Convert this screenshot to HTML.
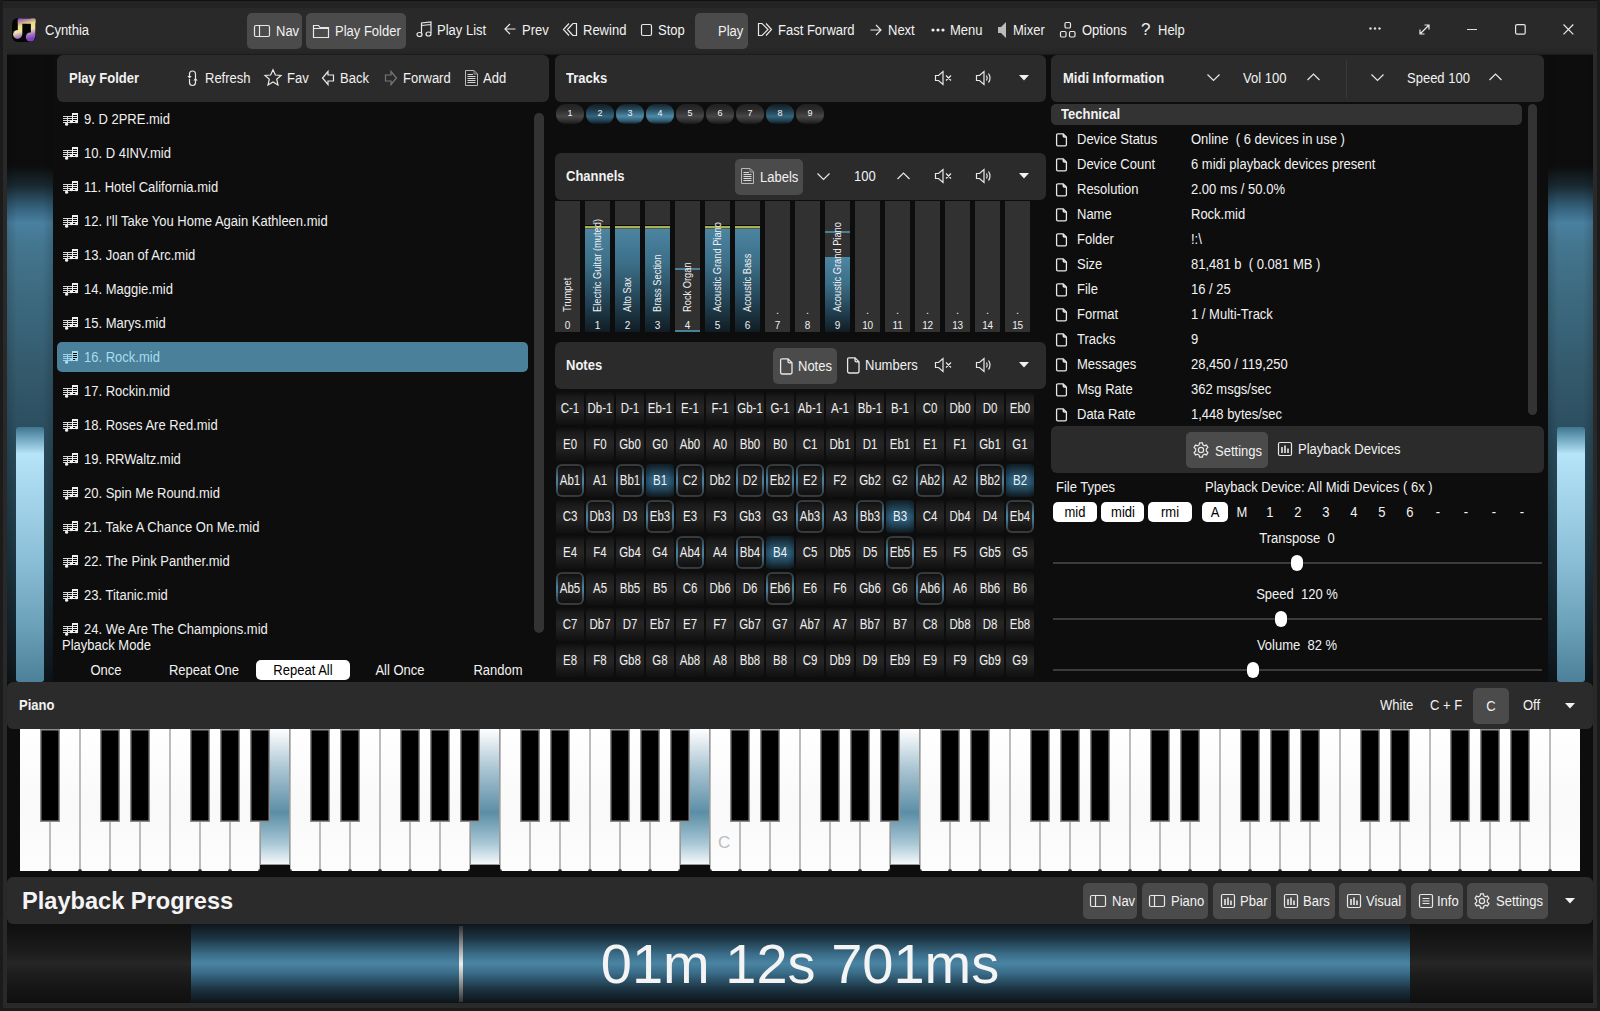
<!DOCTYPE html><html><head><meta charset="utf-8"><style>
*{margin:0;padding:0;box-sizing:border-box}
html,body{width:1600px;height:1011px;overflow:hidden;background:#222;font-family:"Liberation Sans",sans-serif;font-size:13px;color:#f2f2f2}
.ab{position:absolute}
.t{position:absolute;white-space:nowrap;line-height:16px}
.b{font-weight:bold}
.pnl{position:absolute;background:#2b2b2b;border-radius:6px}
.btn{position:absolute;background:#4b4b4b;border-radius:5px}
svg{position:absolute;overflow:visible}
</style></head><body>

<div class="ab" style="left:0;top:0;width:1600px;height:1011px;background:#292929"></div>
<div class="ab" style="left:0;top:0;width:1600px;height:8px;background:#232323"></div><div class="ab" style="left:0;top:0;width:1600px;height:1px;background:#111"></div>
<div class="ab" style="left:0;top:0;width:3px;height:1011px;background:#1b1b1b"></div>
<div class="ab" style="left:1597px;top:0;width:3px;height:1011px;background:#1b1b1b"></div>
<div class="ab" style="left:0;top:1008px;width:1600px;height:3px;background:#1b1b1b"></div>
<div class="ab" style="left:7px;top:47px;width:1586px;height:7px;background:linear-gradient(to bottom,rgba(0,0,0,0),rgba(0,0,0,.12))"></div>
<div class="ab" style="left:7px;top:54px;width:1586px;height:1px;background:#1c1c1c"></div>
<div class="ab" style="left:7px;top:55px;width:1586px;height:948px;background:#0d0d0d"></div>
<svg style="left:12px;top:18px" width="24" height="24" viewBox="0 0 24 24">
<defs><linearGradient id="ig" gradientUnits="userSpaceOnUse" x1="0" y1="0" x2="6" y2="24"><stop offset="0" stop-color="#7b36c4"/><stop offset=".12" stop-color="#8e56b8"/><stop offset=".4" stop-color="#ece27a"/><stop offset=".62" stop-color="#efe0b0"/><stop offset=".85" stop-color="#a070c0"/><stop offset="1" stop-color="#8040c0"/></linearGradient></defs>
<rect x="0" y="0" width="24" height="24" rx="6" fill="#050505"/>
<g fill="url(#ig)"><rect x="5.8" y="0.6" width="17.6" height="5.2" rx="1.5"/><rect x="5.8" y="0.6" width="4.5" height="16"/><rect x="18.9" y="0.6" width="4.5" height="18.5"/><circle cx="5.6" cy="16.4" r="4.5"/><circle cx="18.4" cy="19" r="4.6"/></g>
</svg>
<div class="t" style="left:45px;top:22px;font-size:14px;color:#f2f2f2;transform-origin:0 0;transform:scaleX(0.9286);">Cynthia</div>
<div class="btn" style="left:247px;top:13px;width:55px;height:36px"></div>
<div class="btn" style="left:306px;top:13px;width:100px;height:36px"></div>
<div class="btn" style="left:695px;top:13px;width:53px;height:36px"></div>
<svg style="left:254px;top:25px" width="16" height="12"><rect x=".5" y=".5" width="15" height="11" rx="1.5" fill="none" stroke="#e8e8e8" stroke-width="1.2"/><line x1="5.5" y1=".5" x2="5.5" y2="11.5" fill="none" stroke="#e8e8e8" stroke-width="1.2"/></svg>
<div class="t" style="left:276px;top:23px;font-size:14px;color:#f2f2f2;transform-origin:0 0;transform:scaleX(0.9286);">Nav</div>
<svg style="left:313px;top:24px" width="16" height="14"><path d="M.5 1.5 h5 l1.5 2 h8.5 v10 h-15 z M.5 4.5 h15" fill="none" stroke="#e8e8e8" stroke-width="1.2"/></svg>
<div class="t" style="left:335px;top:23px;font-size:14px;color:#f2f2f2;transform-origin:0 0;transform:scaleX(0.9286);">Play Folder</div>
<svg style="left:416px;top:21px" width="16" height="17"><path d="M5.5 13 V2 L15 1 V12 M5.5 4.5 L15 3.5" fill="none" stroke="#e8e8e8" stroke-width="1.2"/><ellipse cx="3.5" cy="13.5" rx="2.5" ry="2" fill="none" stroke="#e8e8e8" stroke-width="1.2"/><ellipse cx="12.5" cy="13" rx="2.5" ry="2" fill="none" stroke="#e8e8e8" stroke-width="1.2"/></svg>
<div class="t" style="left:437px;top:22px;font-size:14px;color:#f2f2f2;transform-origin:0 0;transform:scaleX(0.9286);">Play List</div>
<svg style="left:504px;top:23px" width="12" height="12"><path d="M11.5 6 H1 M6 1 L1 6 L6 11" fill="none" stroke="#e8e8e8" stroke-width="1.2"/></svg>
<div class="t" style="left:522px;top:22px;font-size:14px;color:#f2f2f2;transform-origin:0 0;transform:scaleX(0.9286);">Prev</div>
<svg style="left:563px;top:23px" width="14" height="13"><path d="M6 .5 L.5 6.5 L6 12.5 M10 .5 L4.5 6.5 L10 12.5 M10 .5 H13.5 V12.5 H10" fill="none" stroke="#e8e8e8" stroke-width="1.2"/></svg>
<div class="t" style="left:583px;top:22px;font-size:14px;color:#f2f2f2;transform-origin:0 0;transform:scaleX(0.9286);">Rewind</div>
<svg style="left:641px;top:24px" width="11" height="12"><rect x=".5" y=".5" width="10" height="11" rx="1.5" fill="none" stroke="#e8e8e8" stroke-width="1.2"/></svg>
<div class="t" style="left:658px;top:22px;font-size:14px;color:#f2f2f2;transform-origin:0 0;transform:scaleX(0.9286);">Stop</div>
<div class="t" style="left:718px;top:23px;font-size:14px;color:#f2f2f2;transform-origin:0 0;transform:scaleX(0.9286);">Play</div>
<svg style="left:758px;top:23px" width="14" height="13"><path d="M.5 .5 H4 L10 6.5 L4 12.5 H.5 Z M8 .5 L13.5 6.5 L8 12.5" fill="none" stroke="#e8e8e8" stroke-width="1.2"/></svg>
<div class="t" style="left:778px;top:22px;font-size:14px;color:#f2f2f2;transform-origin:0 0;transform:scaleX(0.9286);">Fast Forward</div>
<svg style="left:870px;top:24px" width="12" height="12"><path d="M.5 6 H11 M6 1 L11 6 L6 11" fill="none" stroke="#e8e8e8" stroke-width="1.2"/></svg>
<div class="t" style="left:888px;top:22px;font-size:14px;color:#f2f2f2;transform-origin:0 0;transform:scaleX(0.9286);">Next</div>
<svg style="left:931px;top:28px" width="14" height="4"><circle cx="2" cy="2" r="1.6" fill="#eee"/><circle cx="7" cy="2" r="1.6" fill="#eee"/><circle cx="12" cy="2" r="1.6" fill="#eee"/></svg>
<div class="t" style="left:950px;top:22px;font-size:14px;color:#f2f2f2;transform-origin:0 0;transform:scaleX(0.9286);">Menu</div>
<svg style="left:998px;top:22px" width="9" height="16"><path d="M0 5 H3 L8 0 V16 L3 11 H0 Z" fill="#bbb"/></svg>
<div class="t" style="left:1013px;top:22px;font-size:14px;color:#f2f2f2;transform-origin:0 0;transform:scaleX(0.9286);">Mixer</div>
<svg style="left:1060px;top:22px" width="16" height="16"><rect x="5" y=".5" width="5.5" height="5.5" rx="1.2" fill="none" stroke="#e8e8e8" stroke-width="1.2"/><rect x=".5" y="9.5" width="5.5" height="5.5" rx="1.2" fill="none" stroke="#e8e8e8" stroke-width="1.2"/><rect x="9.5" y="9.5" width="5.5" height="5.5" rx="1.2" fill="none" stroke="#e8e8e8" stroke-width="1.2"/></svg>
<div class="t" style="left:1082px;top:22px;font-size:14px;color:#f2f2f2;transform-origin:0 0;transform:scaleX(0.9286);">Options</div>
<div class="t" style="left:1141px;top:20px;font-size:17px;line-height:20px;color:#eee">?</div>
<div class="t" style="left:1158px;top:22px;font-size:14px;color:#f2f2f2;transform-origin:0 0;transform:scaleX(0.9286);">Help</div>
<svg style="left:1369px;top:27px" width="12" height="3"><circle cx="1.5" cy="1.5" r="1.2" fill="#ddd"/><circle cx="6" cy="1.5" r="1.2" fill="#ddd"/><circle cx="10.5" cy="1.5" r="1.2" fill="#ddd"/></svg>
<svg style="left:1419px;top:24px" width="11" height="11"><path d="M1 10 L10 1 M5.5 1 H10 V5.5 M1 5.5 V10 H5.5" fill="none" stroke="#e8e8e8" stroke-width="1.2"/></svg>
<div class="ab" style="left:1467px;top:29px;width:10px;height:1.4px;background:#e0e0e0"></div>
<svg style="left:1515px;top:24px" width="11" height="11"><rect x=".6" y=".6" width="9.6" height="9.6" rx="1.5" fill="none" stroke="#e8e8e8" stroke-width="1.2"/></svg>
<svg style="left:1563px;top:24px" width="11" height="11"><path d="M.5 .5 L10.3 10.3 M10.3 .5 L.5 10.3" fill="none" stroke="#e8e8e8" stroke-width="1.2"/></svg>
<div class="ab" style="left:7px;top:55px;width:46px;height:627px;background:linear-gradient(to bottom,#0d0d0d 0px,#0d0d0d 111px,#1a2a32 131px,#33607a 152px,#4a80a0 168px,#43768f 190px,#3d6a80 240px,#33596b 320px,#2c4f60 372px,#1d3743 500px,#122029 590px,#0e1519 628px)"></div>
<div class="ab" style="left:7px;top:55px;width:46px;height:627px;background:linear-gradient(to right,rgba(0,0,0,.15),rgba(0,0,0,0) 22%,rgba(0,0,0,0) 78%,rgba(0,0,0,.15))"></div>
<div class="ab" style="left:16px;top:427px;width:28px;height:255px;border-radius:3px;background:linear-gradient(to bottom,#3f7590 0px,#7ab0c8 14px,#b6e4f8 27px,#a8d8ee 60px,#8cc0d8 130px,#6aa0b8 200px,#4d8099 255px)"></div>
<div class="ab" style="left:1548px;top:55px;width:45px;height:627px;background:linear-gradient(to bottom,#0d0d0d 0px,#0d0d0d 111px,#1a2a32 131px,#33607a 152px,#4a80a0 168px,#43768f 190px,#3d6a80 240px,#33596b 320px,#2c4f60 372px,#1d3743 500px,#122029 590px,#0e1519 628px)"></div>
<div class="ab" style="left:1548px;top:55px;width:45px;height:627px;background:linear-gradient(to right,rgba(0,0,0,.15),rgba(0,0,0,0) 22%,rgba(0,0,0,0) 78%,rgba(0,0,0,.15))"></div>
<div class="ab" style="left:1557px;top:427px;width:28px;height:255px;border-radius:3px;background:linear-gradient(to bottom,#3f7590 0px,#7ab0c8 14px,#b6e4f8 27px,#a8d8ee 60px,#8cc0d8 130px,#6aa0b8 200px,#4d8099 255px)"></div>
<div class="pnl" style="left:57px;top:55px;width:492px;height:47px"></div>
<div class="pnl" style="left:555px;top:55px;width:491px;height:47px"></div>
<div class="pnl" style="left:1051px;top:55px;width:493px;height:47px"></div>
<div class="pnl" style="left:555px;top:153px;width:491px;height:47px"></div>
<div class="pnl" style="left:555px;top:342px;width:491px;height:47px"></div>
<div class="pnl" style="left:7px;top:682px;width:1586px;height:47px"></div>
<div class="pnl" style="left:7px;top:877px;width:1586px;height:47px"></div>
<div class="t b" style="left:69px;top:70px;font-size:14px;color:#f2f2f2;transform-origin:0 0;transform:scaleX(0.9286);">Play Folder</div>
<svg style="left:187px;top:70px" width="12" height="17"><path d="M2.5 6 V4 A3 3 0 0 1 8.5 4 V12.5 M2.5 9 V12.5 A3 3 0 0 0 8.5 12.5" fill="none" stroke="#e8e8e8" stroke-width="1.2"/><path d="M.3 6 H4.7 L2.5 8.6 Z M6.3 10.6 H10.7 L8.5 8 Z" fill="#e8e8e8"/></svg>
<div class="t" style="left:205px;top:70px;font-size:14px;color:#f2f2f2;transform-origin:0 0;transform:scaleX(0.9286);">Refresh</div>
<svg style="left:264px;top:69px" width="18" height="17"><path d="M9 .8 L11.4 6 L17 6.5 L12.7 10.2 L14 16 L9 13 L4 16 L5.3 10.2 L1 6.5 L6.6 6 Z" fill="none" stroke="#e8e8e8" stroke-width="1.2"/></svg>
<div class="t" style="left:287px;top:70px;font-size:14px;color:#f2f2f2;transform-origin:0 0;transform:scaleX(0.9286);">Fav</div>
<svg style="left:322px;top:71px" width="12" height="14"><path d="M6 .5 L.5 7 L6 13.5 V10 H11.5 V4 H6 Z" fill="none" stroke="#e8e8e8" stroke-width="1.2"/></svg>
<div class="t" style="left:340px;top:70px;font-size:14px;color:#f2f2f2;transform-origin:0 0;transform:scaleX(0.9286);">Back</div>
<svg style="left:385px;top:71px" width="12" height="14"><path d="M6 .5 L11.5 7 L6 13.5 V10 H.5 V4 H6 Z" fill="none" stroke="#777" stroke-width="1.2"/></svg>
<div class="t" style="left:403px;top:70px;font-size:14px;color:#f2f2f2;transform-origin:0 0;transform:scaleX(0.9286);">Forward</div>
<svg style="left:465px;top:70px" width="13" height="17"><path d="M.5 .5 H9 L12.5 4 V15.5 H.5 Z" fill="none" stroke="#b8b8b8" stroke-width="1"/><path d="M9 .5 V4 H12.5" fill="none" stroke="#999" stroke-width="1"/><path d="M2.5 4.5 H8 M2.5 6.5 H10.5 M2.5 8.5 H10.5 M2.5 10.5 H10.5 M2.5 12.5 H10.5" fill="none" stroke="#d8d8d8" stroke-width="1"/></svg>
<div class="t" style="left:483px;top:70px;font-size:14px;color:#f2f2f2;transform-origin:0 0;transform:scaleX(0.9286);">Add</div>
<div class="t b" style="left:566px;top:70px;font-size:14px;color:#f2f2f2;transform-origin:0 0;transform:scaleX(0.9286);">Tracks</div>
<svg style="left:935px;top:71px" width="18" height="15"><path d="M.5 4.5 H3.5 L8 .5 V13.5 L3.5 9.5 H.5 Z M11 4.5 L16 9.5 M16 4.5 L11 9.5" fill="none" stroke="#e8e8e8" stroke-width="1.2"/></svg>
<svg style="left:976px;top:71px" width="17" height="15"><path d="M.5 4.5 H3.5 L8 .5 V13.5 L3.5 9.5 H.5 Z M10.5 4.5 Q12 7 10.5 9.5 M12.5 2.5 Q15.5 7 12.5 11.5" fill="none" stroke="#e8e8e8" stroke-width="1.2"/></svg>
<svg style="left:1019px;top:75px" width="10" height="6"><path d="M0 0 H10 L5 5.5 Z" fill="#f2f2f2"/></svg>
<div class="ab" style="left:556px;top:104px;width:28px;height:20px;border-radius:9px;background:linear-gradient(to bottom,#202020 0%,#2c2c2c 30%,#474747 62%,#2e2e2e 85%,#181818 100%)"></div>
<div class="t" style="left:470px;width:200px;text-align:center;top:105px;font-size:9px;color:#f4f4f4;">1</div>
<div class="ab" style="left:586px;top:104px;width:28px;height:20px;border-radius:9px;background:linear-gradient(to bottom,#111b22 0%,#1f3a4a 30%,#34647e 62%,#203e4e 85%,#0e171d 100%)"></div>
<div class="t" style="left:500px;width:200px;text-align:center;top:105px;font-size:9px;color:#f4f4f4;">2</div>
<div class="ab" style="left:616px;top:104px;width:28px;height:20px;border-radius:9px;background:linear-gradient(to bottom,#14222b 0%,#2a4f62 30%,#4d8aa8 62%,#2f5a70 85%,#111c23 100%)"></div>
<div class="t" style="left:530px;width:200px;text-align:center;top:105px;font-size:9px;color:#f4f4f4;">3</div>
<div class="ab" style="left:646px;top:104px;width:28px;height:20px;border-radius:9px;background:linear-gradient(to bottom,#14222b 0%,#2a4f62 30%,#4d8aa8 62%,#2f5a70 85%,#111c23 100%)"></div>
<div class="t" style="left:560px;width:200px;text-align:center;top:105px;font-size:9px;color:#f4f4f4;">4</div>
<div class="ab" style="left:676px;top:104px;width:28px;height:20px;border-radius:9px;background:linear-gradient(to bottom,#202020 0%,#2c2c2c 30%,#474747 62%,#2e2e2e 85%,#181818 100%)"></div>
<div class="t" style="left:590px;width:200px;text-align:center;top:105px;font-size:9px;color:#f4f4f4;">5</div>
<div class="ab" style="left:706px;top:104px;width:28px;height:20px;border-radius:9px;background:linear-gradient(to bottom,#202020 0%,#2c2c2c 30%,#474747 62%,#2e2e2e 85%,#181818 100%)"></div>
<div class="t" style="left:620px;width:200px;text-align:center;top:105px;font-size:9px;color:#f4f4f4;">6</div>
<div class="ab" style="left:736px;top:104px;width:28px;height:20px;border-radius:9px;background:linear-gradient(to bottom,#202020 0%,#2c2c2c 30%,#474747 62%,#2e2e2e 85%,#181818 100%)"></div>
<div class="t" style="left:650px;width:200px;text-align:center;top:105px;font-size:9px;color:#f4f4f4;">7</div>
<div class="ab" style="left:766px;top:104px;width:28px;height:20px;border-radius:9px;background:linear-gradient(to bottom,#111b22 0%,#1f3a4a 30%,#34647e 62%,#203e4e 85%,#0e171d 100%)"></div>
<div class="t" style="left:680px;width:200px;text-align:center;top:105px;font-size:9px;color:#f4f4f4;">8</div>
<div class="ab" style="left:796px;top:104px;width:28px;height:20px;border-radius:9px;background:linear-gradient(to bottom,#202020 0%,#2c2c2c 30%,#474747 62%,#2e2e2e 85%,#181818 100%)"></div>
<div class="t" style="left:710px;width:200px;text-align:center;top:105px;font-size:9px;color:#f4f4f4;">9</div>
<div class="t b" style="left:566px;top:168px;font-size:14px;color:#f2f2f2;transform-origin:0 0;transform:scaleX(0.9286);">Channels</div>
<div class="btn" style="left:735px;top:159px;width:68px;height:36px"></div>
<svg style="left:741px;top:168px" width="13" height="17"><path d="M.5 .5 H9 L12.5 4 V15.5 H.5 Z" fill="none" stroke="#b8b8b8" stroke-width="1"/><path d="M9 .5 V4 H12.5" fill="none" stroke="#999" stroke-width="1"/><path d="M2.5 4.5 H8 M2.5 6.5 H10.5 M2.5 8.5 H10.5 M2.5 10.5 H10.5 M2.5 12.5 H10.5" fill="none" stroke="#d8d8d8" stroke-width="1"/></svg>
<div class="t" style="left:760px;top:169px;font-size:14px;color:#f2f2f2;transform-origin:0 0;transform:scaleX(0.9286);">Labels</div>
<svg style="left:817px;top:173px" width="13" height="8"><path d="M.5 .5 L6.5 6.5 L12.5 .5" fill="none" stroke="#e8e8e8" stroke-width="1.2"/></svg>
<div class="t" style="left:854px;top:168px;font-size:14px;color:#f2f2f2;transform-origin:0 0;transform:scaleX(0.9286);">100</div>
<svg style="left:897px;top:172px" width="13" height="8"><path d="M.5 7 L6.5 1 L12.5 7" fill="none" stroke="#e8e8e8" stroke-width="1.2"/></svg>
<svg style="left:935px;top:169px" width="18" height="15"><path d="M.5 4.5 H3.5 L8 .5 V13.5 L3.5 9.5 H.5 Z M11 4.5 L16 9.5 M16 4.5 L11 9.5" fill="none" stroke="#e8e8e8" stroke-width="1.2"/></svg>
<svg style="left:976px;top:169px" width="17" height="15"><path d="M.5 4.5 H3.5 L8 .5 V13.5 L3.5 9.5 H.5 Z M10.5 4.5 Q12 7 10.5 9.5 M12.5 2.5 Q15.5 7 12.5 11.5" fill="none" stroke="#e8e8e8" stroke-width="1.2"/></svg>
<svg style="left:1019px;top:173px" width="10" height="6"><path d="M0 0 H10 L5 5.5 Z" fill="#f2f2f2"/></svg>
<div class="ab" style="left:555px;top:201px;width:25px;height:131px;background:#313131"></div>
<div class="t" style="left:567.5px;top:312px;font-size:10px;line-height:12px;color:#f0f0f0;transform-origin:0 0;transform:rotate(-90deg) translate(0,-6.5px) scaleX(0.93)">Trumpet</div>
<div class="t" style="left:467.5px;width:200px;text-align:center;top:318px;font-size:10px;color:#f0f0f0;letter-spacing:-0.3px">0</div>
<div class="ab" style="left:585px;top:201px;width:25px;height:131px;background:#313131"></div>
<div class="ab" style="left:585px;top:226px;width:25px;height:106px;background:linear-gradient(to bottom,#4d86a3 0%,#3c6f88 35%,#244456 70%,#101c24 100%)"></div>
<div class="ab" style="left:585px;top:225px;width:25px;height:4px;background:linear-gradient(to bottom,#0a0a02 0px,#0a0a02 1px,#a4ac48 1px,#b0b460 3px,#4d5e48 3px)"></div>
<div class="t" style="left:597.5px;top:312px;font-size:10px;line-height:12px;color:#f0f0f0;transform-origin:0 0;transform:rotate(-90deg) translate(0,-6.5px) scaleX(0.93)">Electric Guitar (muted)</div>
<div class="t" style="left:497.5px;width:200px;text-align:center;top:318px;font-size:10px;color:#f0f0f0;letter-spacing:-0.3px">1</div>
<div class="ab" style="left:615px;top:201px;width:25px;height:131px;background:#313131"></div>
<div class="ab" style="left:615px;top:226px;width:25px;height:106px;background:linear-gradient(to bottom,#4d86a3 0%,#3c6f88 35%,#244456 70%,#101c24 100%)"></div>
<div class="ab" style="left:615px;top:225px;width:25px;height:4px;background:linear-gradient(to bottom,#0a0a02 0px,#0a0a02 1px,#a4ac48 1px,#b0b460 3px,#4d5e48 3px)"></div>
<div class="t" style="left:627.5px;top:312px;font-size:10px;line-height:12px;color:#f0f0f0;transform-origin:0 0;transform:rotate(-90deg) translate(0,-6.5px) scaleX(0.93)">Alto Sax</div>
<div class="t" style="left:527.5px;width:200px;text-align:center;top:318px;font-size:10px;color:#f0f0f0;letter-spacing:-0.3px">2</div>
<div class="ab" style="left:645px;top:201px;width:25px;height:131px;background:#313131"></div>
<div class="ab" style="left:645px;top:226px;width:25px;height:106px;background:linear-gradient(to bottom,#4d86a3 0%,#3c6f88 35%,#244456 70%,#101c24 100%)"></div>
<div class="ab" style="left:645px;top:225px;width:25px;height:4px;background:linear-gradient(to bottom,#0a0a02 0px,#0a0a02 1px,#a4ac48 1px,#b0b460 3px,#4d5e48 3px)"></div>
<div class="t" style="left:657.5px;top:312px;font-size:10px;line-height:12px;color:#f0f0f0;transform-origin:0 0;transform:rotate(-90deg) translate(0,-6.5px) scaleX(0.93)">Brass Section</div>
<div class="t" style="left:557.5px;width:200px;text-align:center;top:318px;font-size:10px;color:#f0f0f0;letter-spacing:-0.3px">3</div>
<div class="ab" style="left:675px;top:201px;width:25px;height:131px;background:#313131"></div>
<div class="ab" style="left:675px;top:268px;width:25px;height:2px;background:#4a8099"></div>
<div class="ab" style="left:675px;top:330px;width:25px;height:2px;background:#4a8099"></div>
<div class="t" style="left:687.5px;top:312px;font-size:10px;line-height:12px;color:#f0f0f0;transform-origin:0 0;transform:rotate(-90deg) translate(0,-6.5px) scaleX(0.93)">Rock Organ</div>
<div class="t" style="left:587.5px;width:200px;text-align:center;top:318px;font-size:10px;color:#f0f0f0;letter-spacing:-0.3px">4</div>
<div class="ab" style="left:705px;top:201px;width:25px;height:131px;background:#313131"></div>
<div class="ab" style="left:705px;top:226px;width:25px;height:106px;background:linear-gradient(to bottom,#4d86a3 0%,#3c6f88 35%,#244456 70%,#101c24 100%)"></div>
<div class="ab" style="left:705px;top:225px;width:25px;height:4px;background:linear-gradient(to bottom,#0a0a02 0px,#0a0a02 1px,#a4ac48 1px,#b0b460 3px,#4d5e48 3px)"></div>
<div class="t" style="left:717.5px;top:312px;font-size:10px;line-height:12px;color:#f0f0f0;transform-origin:0 0;transform:rotate(-90deg) translate(0,-6.5px) scaleX(0.93)">Acoustic Grand Piano</div>
<div class="t" style="left:617.5px;width:200px;text-align:center;top:318px;font-size:10px;color:#f0f0f0;letter-spacing:-0.3px">5</div>
<div class="ab" style="left:735px;top:201px;width:25px;height:131px;background:#313131"></div>
<div class="ab" style="left:735px;top:226px;width:25px;height:106px;background:linear-gradient(to bottom,#4d86a3 0%,#3c6f88 35%,#244456 70%,#101c24 100%)"></div>
<div class="ab" style="left:735px;top:225px;width:25px;height:4px;background:linear-gradient(to bottom,#0a0a02 0px,#0a0a02 1px,#a4ac48 1px,#b0b460 3px,#4d5e48 3px)"></div>
<div class="t" style="left:747.5px;top:312px;font-size:10px;line-height:12px;color:#f0f0f0;transform-origin:0 0;transform:rotate(-90deg) translate(0,-6.5px) scaleX(0.93)">Acoustic Bass</div>
<div class="t" style="left:647.5px;width:200px;text-align:center;top:318px;font-size:10px;color:#f0f0f0;letter-spacing:-0.3px">6</div>
<div class="ab" style="left:765px;top:201px;width:25px;height:131px;background:#313131"></div>
<div class="t" style="left:677.5px;width:200px;text-align:center;top:302px;font-size:11px;color:#e8e8e8;">.</div>
<div class="t" style="left:677.5px;width:200px;text-align:center;top:318px;font-size:10px;color:#f0f0f0;letter-spacing:-0.3px">7</div>
<div class="ab" style="left:795px;top:201px;width:25px;height:131px;background:#313131"></div>
<div class="t" style="left:707.5px;width:200px;text-align:center;top:302px;font-size:11px;color:#e8e8e8;">.</div>
<div class="t" style="left:707.5px;width:200px;text-align:center;top:318px;font-size:10px;color:#f0f0f0;letter-spacing:-0.3px">8</div>
<div class="ab" style="left:825px;top:201px;width:25px;height:131px;background:#313131"></div>
<div class="ab" style="left:825px;top:231px;width:25px;height:2px;background:#4a8099"></div>
<div class="ab" style="left:825px;top:257px;width:25px;height:75px;background:linear-gradient(to bottom,#4d86a3 0%,#3c6f88 35%,#244456 70%,#101c24 100%)"></div>
<div class="t" style="left:837.5px;top:312px;font-size:10px;line-height:12px;color:#f0f0f0;transform-origin:0 0;transform:rotate(-90deg) translate(0,-6.5px) scaleX(0.93)">Acoustic Grand Piano</div>
<div class="t" style="left:737.5px;width:200px;text-align:center;top:318px;font-size:10px;color:#f0f0f0;letter-spacing:-0.3px">9</div>
<div class="ab" style="left:855px;top:201px;width:25px;height:131px;background:#313131"></div>
<div class="t" style="left:767.5px;width:200px;text-align:center;top:302px;font-size:11px;color:#e8e8e8;">.</div>
<div class="t" style="left:767.5px;width:200px;text-align:center;top:318px;font-size:10px;color:#f0f0f0;letter-spacing:-0.3px">10</div>
<div class="ab" style="left:885px;top:201px;width:25px;height:131px;background:#313131"></div>
<div class="t" style="left:797.5px;width:200px;text-align:center;top:302px;font-size:11px;color:#e8e8e8;">.</div>
<div class="t" style="left:797.5px;width:200px;text-align:center;top:318px;font-size:10px;color:#f0f0f0;letter-spacing:-0.3px">11</div>
<div class="ab" style="left:915px;top:201px;width:25px;height:131px;background:#313131"></div>
<div class="t" style="left:827.5px;width:200px;text-align:center;top:302px;font-size:11px;color:#e8e8e8;">.</div>
<div class="t" style="left:827.5px;width:200px;text-align:center;top:318px;font-size:10px;color:#f0f0f0;letter-spacing:-0.3px">12</div>
<div class="ab" style="left:945px;top:201px;width:25px;height:131px;background:#313131"></div>
<div class="t" style="left:857.5px;width:200px;text-align:center;top:302px;font-size:11px;color:#e8e8e8;">.</div>
<div class="t" style="left:857.5px;width:200px;text-align:center;top:318px;font-size:10px;color:#f0f0f0;letter-spacing:-0.3px">13</div>
<div class="ab" style="left:975px;top:201px;width:25px;height:131px;background:#313131"></div>
<div class="t" style="left:887.5px;width:200px;text-align:center;top:302px;font-size:11px;color:#e8e8e8;">.</div>
<div class="t" style="left:887.5px;width:200px;text-align:center;top:318px;font-size:10px;color:#f0f0f0;letter-spacing:-0.3px">14</div>
<div class="ab" style="left:1005px;top:201px;width:25px;height:131px;background:#313131"></div>
<div class="t" style="left:917.5px;width:200px;text-align:center;top:302px;font-size:11px;color:#e8e8e8;">.</div>
<div class="t" style="left:917.5px;width:200px;text-align:center;top:318px;font-size:10px;color:#f0f0f0;letter-spacing:-0.3px">15</div>
<div class="t b" style="left:566px;top:357px;font-size:14px;color:#f2f2f2;transform-origin:0 0;transform:scaleX(0.9286);">Notes</div>
<div class="btn" style="left:773px;top:348px;width:64px;height:36px"></div>
<svg style="left:780px;top:358px" width="13" height="17"><path d="M2 .8 H8 L12 4.8 V14.6 Q12 16 10.6 16 H2 Q.6 16 .6 14.6 V2.2 Q.6 .8 2 .8 Z M8 .8 V3.4 Q8 4.8 9.4 4.8 H12" fill="none" stroke="#e8e8e8" stroke-width="1.3"/></svg>
<div class="t" style="left:798px;top:358px;font-size:14px;color:#f2f2f2;transform-origin:0 0;transform:scaleX(0.9286);">Notes</div>
<svg style="left:847px;top:357px" width="13" height="17"><path d="M2 .8 H8 L12 4.8 V14.6 Q12 16 10.6 16 H2 Q.6 16 .6 14.6 V2.2 Q.6 .8 2 .8 Z M8 .8 V3.4 Q8 4.8 9.4 4.8 H12" fill="none" stroke="#e8e8e8" stroke-width="1.3"/></svg>
<div class="t" style="left:865px;top:357px;font-size:14px;color:#f2f2f2;transform-origin:0 0;transform:scaleX(0.9286);">Numbers</div>
<svg style="left:935px;top:358px" width="18" height="15"><path d="M.5 4.5 H3.5 L8 .5 V13.5 L3.5 9.5 H.5 Z M11 4.5 L16 9.5 M16 4.5 L11 9.5" fill="none" stroke="#e8e8e8" stroke-width="1.2"/></svg>
<svg style="left:976px;top:358px" width="17" height="15"><path d="M.5 4.5 H3.5 L8 .5 V13.5 L3.5 9.5 H.5 Z M10.5 4.5 Q12 7 10.5 9.5 M12.5 2.5 Q15.5 7 12.5 11.5" fill="none" stroke="#e8e8e8" stroke-width="1.2"/></svg>
<svg style="left:1019px;top:362px" width="10" height="6"><path d="M0 0 H10 L5 5.5 Z" fill="#f2f2f2"/></svg>
<div class="ab" style="left:556px;top:392px;width:28px;height:33px;border-radius:4px;background:linear-gradient(to bottom,#0f0f0f 0%,#1a1a1a 15%,#252525 45%,#232323 60%,#161616 85%,#101010 100%)"></div>
<div class="t" style="left:520px;width:100px;text-align:center;top:400px;font-size:14px;color:#f0f0f0;transform-origin:50px 0;transform:scaleX(0.82)">C-1</div>
<div class="ab" style="left:586px;top:392px;width:28px;height:33px;border-radius:4px;background:linear-gradient(to bottom,#0f0f0f 0%,#1a1a1a 15%,#252525 45%,#232323 60%,#161616 85%,#101010 100%)"></div>
<div class="t" style="left:550px;width:100px;text-align:center;top:400px;font-size:14px;color:#f0f0f0;transform-origin:50px 0;transform:scaleX(0.82)">Db-1</div>
<div class="ab" style="left:616px;top:392px;width:28px;height:33px;border-radius:4px;background:linear-gradient(to bottom,#0f0f0f 0%,#1a1a1a 15%,#252525 45%,#232323 60%,#161616 85%,#101010 100%)"></div>
<div class="t" style="left:580px;width:100px;text-align:center;top:400px;font-size:14px;color:#f0f0f0;transform-origin:50px 0;transform:scaleX(0.82)">D-1</div>
<div class="ab" style="left:646px;top:392px;width:28px;height:33px;border-radius:4px;background:linear-gradient(to bottom,#0f0f0f 0%,#1a1a1a 15%,#252525 45%,#232323 60%,#161616 85%,#101010 100%)"></div>
<div class="t" style="left:610px;width:100px;text-align:center;top:400px;font-size:14px;color:#f0f0f0;transform-origin:50px 0;transform:scaleX(0.82)">Eb-1</div>
<div class="ab" style="left:676px;top:392px;width:28px;height:33px;border-radius:4px;background:linear-gradient(to bottom,#0f0f0f 0%,#1a1a1a 15%,#252525 45%,#232323 60%,#161616 85%,#101010 100%)"></div>
<div class="t" style="left:640px;width:100px;text-align:center;top:400px;font-size:14px;color:#f0f0f0;transform-origin:50px 0;transform:scaleX(0.82)">E-1</div>
<div class="ab" style="left:706px;top:392px;width:28px;height:33px;border-radius:4px;background:linear-gradient(to bottom,#0f0f0f 0%,#1a1a1a 15%,#252525 45%,#232323 60%,#161616 85%,#101010 100%)"></div>
<div class="t" style="left:670px;width:100px;text-align:center;top:400px;font-size:14px;color:#f0f0f0;transform-origin:50px 0;transform:scaleX(0.82)">F-1</div>
<div class="ab" style="left:736px;top:392px;width:28px;height:33px;border-radius:4px;background:linear-gradient(to bottom,#0f0f0f 0%,#1a1a1a 15%,#252525 45%,#232323 60%,#161616 85%,#101010 100%)"></div>
<div class="t" style="left:700px;width:100px;text-align:center;top:400px;font-size:14px;color:#f0f0f0;transform-origin:50px 0;transform:scaleX(0.82)">Gb-1</div>
<div class="ab" style="left:766px;top:392px;width:28px;height:33px;border-radius:4px;background:linear-gradient(to bottom,#0f0f0f 0%,#1a1a1a 15%,#252525 45%,#232323 60%,#161616 85%,#101010 100%)"></div>
<div class="t" style="left:730px;width:100px;text-align:center;top:400px;font-size:14px;color:#f0f0f0;transform-origin:50px 0;transform:scaleX(0.82)">G-1</div>
<div class="ab" style="left:796px;top:392px;width:28px;height:33px;border-radius:4px;background:linear-gradient(to bottom,#0f0f0f 0%,#1a1a1a 15%,#252525 45%,#232323 60%,#161616 85%,#101010 100%)"></div>
<div class="t" style="left:760px;width:100px;text-align:center;top:400px;font-size:14px;color:#f0f0f0;transform-origin:50px 0;transform:scaleX(0.82)">Ab-1</div>
<div class="ab" style="left:826px;top:392px;width:28px;height:33px;border-radius:4px;background:linear-gradient(to bottom,#0f0f0f 0%,#1a1a1a 15%,#252525 45%,#232323 60%,#161616 85%,#101010 100%)"></div>
<div class="t" style="left:790px;width:100px;text-align:center;top:400px;font-size:14px;color:#f0f0f0;transform-origin:50px 0;transform:scaleX(0.82)">A-1</div>
<div class="ab" style="left:856px;top:392px;width:28px;height:33px;border-radius:4px;background:linear-gradient(to bottom,#0f0f0f 0%,#1a1a1a 15%,#252525 45%,#232323 60%,#161616 85%,#101010 100%)"></div>
<div class="t" style="left:820px;width:100px;text-align:center;top:400px;font-size:14px;color:#f0f0f0;transform-origin:50px 0;transform:scaleX(0.82)">Bb-1</div>
<div class="ab" style="left:886px;top:392px;width:28px;height:33px;border-radius:4px;background:linear-gradient(to bottom,#0f0f0f 0%,#1a1a1a 15%,#252525 45%,#232323 60%,#161616 85%,#101010 100%)"></div>
<div class="t" style="left:850px;width:100px;text-align:center;top:400px;font-size:14px;color:#f0f0f0;transform-origin:50px 0;transform:scaleX(0.82)">B-1</div>
<div class="ab" style="left:916px;top:392px;width:28px;height:33px;border-radius:4px;background:linear-gradient(to bottom,#0f0f0f 0%,#1a1a1a 15%,#252525 45%,#232323 60%,#161616 85%,#101010 100%)"></div>
<div class="t" style="left:880px;width:100px;text-align:center;top:400px;font-size:14px;color:#f0f0f0;transform-origin:50px 0;transform:scaleX(0.82)">C0</div>
<div class="ab" style="left:946px;top:392px;width:28px;height:33px;border-radius:4px;background:linear-gradient(to bottom,#0f0f0f 0%,#1a1a1a 15%,#252525 45%,#232323 60%,#161616 85%,#101010 100%)"></div>
<div class="t" style="left:910px;width:100px;text-align:center;top:400px;font-size:14px;color:#f0f0f0;transform-origin:50px 0;transform:scaleX(0.82)">Db0</div>
<div class="ab" style="left:976px;top:392px;width:28px;height:33px;border-radius:4px;background:linear-gradient(to bottom,#0f0f0f 0%,#1a1a1a 15%,#252525 45%,#232323 60%,#161616 85%,#101010 100%)"></div>
<div class="t" style="left:940px;width:100px;text-align:center;top:400px;font-size:14px;color:#f0f0f0;transform-origin:50px 0;transform:scaleX(0.82)">D0</div>
<div class="ab" style="left:1006px;top:392px;width:28px;height:33px;border-radius:4px;background:linear-gradient(to bottom,#0f0f0f 0%,#1a1a1a 15%,#252525 45%,#232323 60%,#161616 85%,#101010 100%)"></div>
<div class="t" style="left:970px;width:100px;text-align:center;top:400px;font-size:14px;color:#f0f0f0;transform-origin:50px 0;transform:scaleX(0.82)">Eb0</div>
<div class="ab" style="left:556px;top:428px;width:28px;height:33px;border-radius:4px;background:linear-gradient(to bottom,#0f0f0f 0%,#1a1a1a 15%,#252525 45%,#232323 60%,#161616 85%,#101010 100%)"></div>
<div class="t" style="left:520px;width:100px;text-align:center;top:436px;font-size:14px;color:#f0f0f0;transform-origin:50px 0;transform:scaleX(0.82)">E0</div>
<div class="ab" style="left:586px;top:428px;width:28px;height:33px;border-radius:4px;background:linear-gradient(to bottom,#0f0f0f 0%,#1a1a1a 15%,#252525 45%,#232323 60%,#161616 85%,#101010 100%)"></div>
<div class="t" style="left:550px;width:100px;text-align:center;top:436px;font-size:14px;color:#f0f0f0;transform-origin:50px 0;transform:scaleX(0.82)">F0</div>
<div class="ab" style="left:616px;top:428px;width:28px;height:33px;border-radius:4px;background:linear-gradient(to bottom,#0f0f0f 0%,#1a1a1a 15%,#252525 45%,#232323 60%,#161616 85%,#101010 100%)"></div>
<div class="t" style="left:580px;width:100px;text-align:center;top:436px;font-size:14px;color:#f0f0f0;transform-origin:50px 0;transform:scaleX(0.82)">Gb0</div>
<div class="ab" style="left:646px;top:428px;width:28px;height:33px;border-radius:4px;background:linear-gradient(to bottom,#0f0f0f 0%,#1a1a1a 15%,#252525 45%,#232323 60%,#161616 85%,#101010 100%)"></div>
<div class="t" style="left:610px;width:100px;text-align:center;top:436px;font-size:14px;color:#f0f0f0;transform-origin:50px 0;transform:scaleX(0.82)">G0</div>
<div class="ab" style="left:676px;top:428px;width:28px;height:33px;border-radius:4px;background:linear-gradient(to bottom,#0f0f0f 0%,#1a1a1a 15%,#252525 45%,#232323 60%,#161616 85%,#101010 100%)"></div>
<div class="t" style="left:640px;width:100px;text-align:center;top:436px;font-size:14px;color:#f0f0f0;transform-origin:50px 0;transform:scaleX(0.82)">Ab0</div>
<div class="ab" style="left:706px;top:428px;width:28px;height:33px;border-radius:4px;background:linear-gradient(to bottom,#0f0f0f 0%,#1a1a1a 15%,#252525 45%,#232323 60%,#161616 85%,#101010 100%)"></div>
<div class="t" style="left:670px;width:100px;text-align:center;top:436px;font-size:14px;color:#f0f0f0;transform-origin:50px 0;transform:scaleX(0.82)">A0</div>
<div class="ab" style="left:736px;top:428px;width:28px;height:33px;border-radius:4px;background:linear-gradient(to bottom,#0f0f0f 0%,#1a1a1a 15%,#252525 45%,#232323 60%,#161616 85%,#101010 100%)"></div>
<div class="t" style="left:700px;width:100px;text-align:center;top:436px;font-size:14px;color:#f0f0f0;transform-origin:50px 0;transform:scaleX(0.82)">Bb0</div>
<div class="ab" style="left:766px;top:428px;width:28px;height:33px;border-radius:4px;background:linear-gradient(to bottom,#0f0f0f 0%,#1a1a1a 15%,#252525 45%,#232323 60%,#161616 85%,#101010 100%)"></div>
<div class="t" style="left:730px;width:100px;text-align:center;top:436px;font-size:14px;color:#f0f0f0;transform-origin:50px 0;transform:scaleX(0.82)">B0</div>
<div class="ab" style="left:796px;top:428px;width:28px;height:33px;border-radius:4px;background:linear-gradient(to bottom,#0f0f0f 0%,#1a1a1a 15%,#252525 45%,#232323 60%,#161616 85%,#101010 100%)"></div>
<div class="t" style="left:760px;width:100px;text-align:center;top:436px;font-size:14px;color:#f0f0f0;transform-origin:50px 0;transform:scaleX(0.82)">C1</div>
<div class="ab" style="left:826px;top:428px;width:28px;height:33px;border-radius:4px;background:linear-gradient(to bottom,#0f0f0f 0%,#1a1a1a 15%,#252525 45%,#232323 60%,#161616 85%,#101010 100%)"></div>
<div class="t" style="left:790px;width:100px;text-align:center;top:436px;font-size:14px;color:#f0f0f0;transform-origin:50px 0;transform:scaleX(0.82)">Db1</div>
<div class="ab" style="left:856px;top:428px;width:28px;height:33px;border-radius:4px;background:linear-gradient(to bottom,#0f0f0f 0%,#1a1a1a 15%,#252525 45%,#232323 60%,#161616 85%,#101010 100%)"></div>
<div class="t" style="left:820px;width:100px;text-align:center;top:436px;font-size:14px;color:#f0f0f0;transform-origin:50px 0;transform:scaleX(0.82)">D1</div>
<div class="ab" style="left:886px;top:428px;width:28px;height:33px;border-radius:4px;background:linear-gradient(to bottom,#0f0f0f 0%,#1a1a1a 15%,#252525 45%,#232323 60%,#161616 85%,#101010 100%)"></div>
<div class="t" style="left:850px;width:100px;text-align:center;top:436px;font-size:14px;color:#f0f0f0;transform-origin:50px 0;transform:scaleX(0.82)">Eb1</div>
<div class="ab" style="left:916px;top:428px;width:28px;height:33px;border-radius:4px;background:linear-gradient(to bottom,#0f0f0f 0%,#1a1a1a 15%,#252525 45%,#232323 60%,#161616 85%,#101010 100%)"></div>
<div class="t" style="left:880px;width:100px;text-align:center;top:436px;font-size:14px;color:#f0f0f0;transform-origin:50px 0;transform:scaleX(0.82)">E1</div>
<div class="ab" style="left:946px;top:428px;width:28px;height:33px;border-radius:4px;background:linear-gradient(to bottom,#0f0f0f 0%,#1a1a1a 15%,#252525 45%,#232323 60%,#161616 85%,#101010 100%)"></div>
<div class="t" style="left:910px;width:100px;text-align:center;top:436px;font-size:14px;color:#f0f0f0;transform-origin:50px 0;transform:scaleX(0.82)">F1</div>
<div class="ab" style="left:976px;top:428px;width:28px;height:33px;border-radius:4px;background:linear-gradient(to bottom,#0f0f0f 0%,#1a1a1a 15%,#252525 45%,#232323 60%,#161616 85%,#101010 100%)"></div>
<div class="t" style="left:940px;width:100px;text-align:center;top:436px;font-size:14px;color:#f0f0f0;transform-origin:50px 0;transform:scaleX(0.82)">Gb1</div>
<div class="ab" style="left:1006px;top:428px;width:28px;height:33px;border-radius:4px;background:linear-gradient(to bottom,#0f0f0f 0%,#1a1a1a 15%,#252525 45%,#232323 60%,#161616 85%,#101010 100%)"></div>
<div class="t" style="left:970px;width:100px;text-align:center;top:436px;font-size:14px;color:#f0f0f0;transform-origin:50px 0;transform:scaleX(0.82)">G1</div>
<div class="ab" style="left:556px;top:464px;width:28px;height:33px;border-radius:6px;background:linear-gradient(to bottom,#353535 0%,#3a5464 22%,#4a7d9a 42%,#4a7d9a 58%,#3a5464 78%,#353535 100%)"></div>
<div class="ab" style="left:558px;top:466px;width:24px;height:29px;border-radius:4px;background:linear-gradient(to bottom,#0f0f0f 0%,#1a1a1a 15%,#252525 45%,#232323 60%,#161616 85%,#101010 100%)"></div>
<div class="t" style="left:520px;width:100px;text-align:center;top:472px;font-size:14px;color:#f0f0f0;transform-origin:50px 0;transform:scaleX(0.82)">Ab1</div>
<div class="ab" style="left:586px;top:464px;width:28px;height:33px;border-radius:4px;background:linear-gradient(to bottom,#0f0f0f 0%,#1a1a1a 15%,#252525 45%,#232323 60%,#161616 85%,#101010 100%)"></div>
<div class="t" style="left:550px;width:100px;text-align:center;top:472px;font-size:14px;color:#f0f0f0;transform-origin:50px 0;transform:scaleX(0.82)">A1</div>
<div class="ab" style="left:616px;top:464px;width:28px;height:33px;border-radius:6px;background:linear-gradient(to bottom,#353535 0%,#3a5464 22%,#4a7d9a 42%,#4a7d9a 58%,#3a5464 78%,#353535 100%)"></div>
<div class="ab" style="left:618px;top:466px;width:24px;height:29px;border-radius:4px;background:linear-gradient(to bottom,#0f0f0f 0%,#1a1a1a 15%,#252525 45%,#232323 60%,#161616 85%,#101010 100%)"></div>
<div class="t" style="left:580px;width:100px;text-align:center;top:472px;font-size:14px;color:#f0f0f0;transform-origin:50px 0;transform:scaleX(0.82)">Bb1</div>
<div class="ab" style="left:646px;top:464px;width:28px;height:33px;border-radius:4px;background:linear-gradient(to bottom,#111c23 0%,#1f3e50 22%,#2d5f7c 45%,#2d5f7c 58%,#1f3e50 80%,#0f181e 100%)"></div>
<div class="ab" style="left:646px;top:464px;width:28px;height:33px;border-radius:4px;background:linear-gradient(to right,rgba(0,0,0,.25),rgba(0,0,0,0) 22%,rgba(0,0,0,0) 78%,rgba(0,0,0,.25))"></div>
<div class="t" style="left:610px;width:100px;text-align:center;top:472px;font-size:14px;color:#f0f0f0;transform-origin:50px 0;transform:scaleX(0.82)">B1</div>
<div class="ab" style="left:676px;top:464px;width:28px;height:33px;border-radius:6px;background:linear-gradient(to bottom,#353535 0%,#3a5464 22%,#4a7d9a 42%,#4a7d9a 58%,#3a5464 78%,#353535 100%)"></div>
<div class="ab" style="left:678px;top:466px;width:24px;height:29px;border-radius:4px;background:linear-gradient(to bottom,#0f0f0f 0%,#1a1a1a 15%,#252525 45%,#232323 60%,#161616 85%,#101010 100%)"></div>
<div class="t" style="left:640px;width:100px;text-align:center;top:472px;font-size:14px;color:#f0f0f0;transform-origin:50px 0;transform:scaleX(0.82)">C2</div>
<div class="ab" style="left:706px;top:464px;width:28px;height:33px;border-radius:4px;background:linear-gradient(to bottom,#0f0f0f 0%,#1a1a1a 15%,#252525 45%,#232323 60%,#161616 85%,#101010 100%)"></div>
<div class="t" style="left:670px;width:100px;text-align:center;top:472px;font-size:14px;color:#f0f0f0;transform-origin:50px 0;transform:scaleX(0.82)">Db2</div>
<div class="ab" style="left:736px;top:464px;width:28px;height:33px;border-radius:6px;background:linear-gradient(to bottom,#353535 0%,#3a5464 22%,#4a7d9a 42%,#4a7d9a 58%,#3a5464 78%,#353535 100%)"></div>
<div class="ab" style="left:738px;top:466px;width:24px;height:29px;border-radius:4px;background:linear-gradient(to bottom,#0f0f0f 0%,#1a1a1a 15%,#252525 45%,#232323 60%,#161616 85%,#101010 100%)"></div>
<div class="t" style="left:700px;width:100px;text-align:center;top:472px;font-size:14px;color:#f0f0f0;transform-origin:50px 0;transform:scaleX(0.82)">D2</div>
<div class="ab" style="left:766px;top:464px;width:28px;height:33px;border-radius:6px;background:linear-gradient(to bottom,#353535 0%,#3a5464 22%,#4a7d9a 42%,#4a7d9a 58%,#3a5464 78%,#353535 100%)"></div>
<div class="ab" style="left:768px;top:466px;width:24px;height:29px;border-radius:4px;background:linear-gradient(to bottom,#0f0f0f 0%,#1a1a1a 15%,#252525 45%,#232323 60%,#161616 85%,#101010 100%)"></div>
<div class="t" style="left:730px;width:100px;text-align:center;top:472px;font-size:14px;color:#f0f0f0;transform-origin:50px 0;transform:scaleX(0.82)">Eb2</div>
<div class="ab" style="left:796px;top:464px;width:28px;height:33px;border-radius:6px;background:linear-gradient(to bottom,#353535 0%,#3a5464 22%,#4a7d9a 42%,#4a7d9a 58%,#3a5464 78%,#353535 100%)"></div>
<div class="ab" style="left:798px;top:466px;width:24px;height:29px;border-radius:4px;background:linear-gradient(to bottom,#0f0f0f 0%,#1a1a1a 15%,#252525 45%,#232323 60%,#161616 85%,#101010 100%)"></div>
<div class="t" style="left:760px;width:100px;text-align:center;top:472px;font-size:14px;color:#f0f0f0;transform-origin:50px 0;transform:scaleX(0.82)">E2</div>
<div class="ab" style="left:826px;top:464px;width:28px;height:33px;border-radius:4px;background:linear-gradient(to bottom,#0f0f0f 0%,#1a1a1a 15%,#252525 45%,#232323 60%,#161616 85%,#101010 100%)"></div>
<div class="t" style="left:790px;width:100px;text-align:center;top:472px;font-size:14px;color:#f0f0f0;transform-origin:50px 0;transform:scaleX(0.82)">F2</div>
<div class="ab" style="left:856px;top:464px;width:28px;height:33px;border-radius:4px;background:linear-gradient(to bottom,#0f0f0f 0%,#1a1a1a 15%,#252525 45%,#232323 60%,#161616 85%,#101010 100%)"></div>
<div class="t" style="left:820px;width:100px;text-align:center;top:472px;font-size:14px;color:#f0f0f0;transform-origin:50px 0;transform:scaleX(0.82)">Gb2</div>
<div class="ab" style="left:886px;top:464px;width:28px;height:33px;border-radius:4px;background:linear-gradient(to bottom,#0f0f0f 0%,#1a1a1a 15%,#252525 45%,#232323 60%,#161616 85%,#101010 100%)"></div>
<div class="t" style="left:850px;width:100px;text-align:center;top:472px;font-size:14px;color:#f0f0f0;transform-origin:50px 0;transform:scaleX(0.82)">G2</div>
<div class="ab" style="left:916px;top:464px;width:28px;height:33px;border-radius:6px;background:linear-gradient(to bottom,#353535 0%,#3a5464 22%,#4a7d9a 42%,#4a7d9a 58%,#3a5464 78%,#353535 100%)"></div>
<div class="ab" style="left:918px;top:466px;width:24px;height:29px;border-radius:4px;background:linear-gradient(to bottom,#0f0f0f 0%,#1a1a1a 15%,#252525 45%,#232323 60%,#161616 85%,#101010 100%)"></div>
<div class="t" style="left:880px;width:100px;text-align:center;top:472px;font-size:14px;color:#f0f0f0;transform-origin:50px 0;transform:scaleX(0.82)">Ab2</div>
<div class="ab" style="left:946px;top:464px;width:28px;height:33px;border-radius:4px;background:linear-gradient(to bottom,#0f0f0f 0%,#1a1a1a 15%,#252525 45%,#232323 60%,#161616 85%,#101010 100%)"></div>
<div class="t" style="left:910px;width:100px;text-align:center;top:472px;font-size:14px;color:#f0f0f0;transform-origin:50px 0;transform:scaleX(0.82)">A2</div>
<div class="ab" style="left:976px;top:464px;width:28px;height:33px;border-radius:6px;background:linear-gradient(to bottom,#353535 0%,#3a5464 22%,#4a7d9a 42%,#4a7d9a 58%,#3a5464 78%,#353535 100%)"></div>
<div class="ab" style="left:978px;top:466px;width:24px;height:29px;border-radius:4px;background:linear-gradient(to bottom,#0f0f0f 0%,#1a1a1a 15%,#252525 45%,#232323 60%,#161616 85%,#101010 100%)"></div>
<div class="t" style="left:940px;width:100px;text-align:center;top:472px;font-size:14px;color:#f0f0f0;transform-origin:50px 0;transform:scaleX(0.82)">Bb2</div>
<div class="ab" style="left:1006px;top:464px;width:28px;height:33px;border-radius:4px;background:linear-gradient(to bottom,#111c23 0%,#1f3e50 22%,#2d5f7c 45%,#2d5f7c 58%,#1f3e50 80%,#0f181e 100%)"></div>
<div class="ab" style="left:1006px;top:464px;width:28px;height:33px;border-radius:4px;background:linear-gradient(to right,rgba(0,0,0,.25),rgba(0,0,0,0) 22%,rgba(0,0,0,0) 78%,rgba(0,0,0,.25))"></div>
<div class="t" style="left:970px;width:100px;text-align:center;top:472px;font-size:14px;color:#f0f0f0;transform-origin:50px 0;transform:scaleX(0.82)">B2</div>
<div class="ab" style="left:556px;top:500px;width:28px;height:33px;border-radius:4px;background:linear-gradient(to bottom,#0f0f0f 0%,#1a1a1a 15%,#252525 45%,#232323 60%,#161616 85%,#101010 100%)"></div>
<div class="t" style="left:520px;width:100px;text-align:center;top:508px;font-size:14px;color:#f0f0f0;transform-origin:50px 0;transform:scaleX(0.82)">C3</div>
<div class="ab" style="left:586px;top:500px;width:28px;height:33px;border-radius:6px;background:linear-gradient(to bottom,#353535 0%,#3a5464 22%,#4a7d9a 42%,#4a7d9a 58%,#3a5464 78%,#353535 100%)"></div>
<div class="ab" style="left:588px;top:502px;width:24px;height:29px;border-radius:4px;background:linear-gradient(to bottom,#0f0f0f 0%,#1a1a1a 15%,#252525 45%,#232323 60%,#161616 85%,#101010 100%)"></div>
<div class="t" style="left:550px;width:100px;text-align:center;top:508px;font-size:14px;color:#f0f0f0;transform-origin:50px 0;transform:scaleX(0.82)">Db3</div>
<div class="ab" style="left:616px;top:500px;width:28px;height:33px;border-radius:4px;background:linear-gradient(to bottom,#0f0f0f 0%,#1a1a1a 15%,#252525 45%,#232323 60%,#161616 85%,#101010 100%)"></div>
<div class="t" style="left:580px;width:100px;text-align:center;top:508px;font-size:14px;color:#f0f0f0;transform-origin:50px 0;transform:scaleX(0.82)">D3</div>
<div class="ab" style="left:646px;top:500px;width:28px;height:33px;border-radius:6px;background:linear-gradient(to bottom,#353535 0%,#3a5464 22%,#4a7d9a 42%,#4a7d9a 58%,#3a5464 78%,#353535 100%)"></div>
<div class="ab" style="left:648px;top:502px;width:24px;height:29px;border-radius:4px;background:linear-gradient(to bottom,#0f0f0f 0%,#1a1a1a 15%,#252525 45%,#232323 60%,#161616 85%,#101010 100%)"></div>
<div class="t" style="left:610px;width:100px;text-align:center;top:508px;font-size:14px;color:#f0f0f0;transform-origin:50px 0;transform:scaleX(0.82)">Eb3</div>
<div class="ab" style="left:676px;top:500px;width:28px;height:33px;border-radius:4px;background:linear-gradient(to bottom,#0f0f0f 0%,#1a1a1a 15%,#252525 45%,#232323 60%,#161616 85%,#101010 100%)"></div>
<div class="t" style="left:640px;width:100px;text-align:center;top:508px;font-size:14px;color:#f0f0f0;transform-origin:50px 0;transform:scaleX(0.82)">E3</div>
<div class="ab" style="left:706px;top:500px;width:28px;height:33px;border-radius:4px;background:linear-gradient(to bottom,#0f0f0f 0%,#1a1a1a 15%,#252525 45%,#232323 60%,#161616 85%,#101010 100%)"></div>
<div class="t" style="left:670px;width:100px;text-align:center;top:508px;font-size:14px;color:#f0f0f0;transform-origin:50px 0;transform:scaleX(0.82)">F3</div>
<div class="ab" style="left:736px;top:500px;width:28px;height:33px;border-radius:4px;background:linear-gradient(to bottom,#0f0f0f 0%,#1a1a1a 15%,#252525 45%,#232323 60%,#161616 85%,#101010 100%)"></div>
<div class="t" style="left:700px;width:100px;text-align:center;top:508px;font-size:14px;color:#f0f0f0;transform-origin:50px 0;transform:scaleX(0.82)">Gb3</div>
<div class="ab" style="left:766px;top:500px;width:28px;height:33px;border-radius:4px;background:linear-gradient(to bottom,#0f0f0f 0%,#1a1a1a 15%,#252525 45%,#232323 60%,#161616 85%,#101010 100%)"></div>
<div class="t" style="left:730px;width:100px;text-align:center;top:508px;font-size:14px;color:#f0f0f0;transform-origin:50px 0;transform:scaleX(0.82)">G3</div>
<div class="ab" style="left:796px;top:500px;width:28px;height:33px;border-radius:6px;background:linear-gradient(to bottom,#353535 0%,#3a5464 22%,#4a7d9a 42%,#4a7d9a 58%,#3a5464 78%,#353535 100%)"></div>
<div class="ab" style="left:798px;top:502px;width:24px;height:29px;border-radius:4px;background:linear-gradient(to bottom,#0f0f0f 0%,#1a1a1a 15%,#252525 45%,#232323 60%,#161616 85%,#101010 100%)"></div>
<div class="t" style="left:760px;width:100px;text-align:center;top:508px;font-size:14px;color:#f0f0f0;transform-origin:50px 0;transform:scaleX(0.82)">Ab3</div>
<div class="ab" style="left:826px;top:500px;width:28px;height:33px;border-radius:4px;background:linear-gradient(to bottom,#0f0f0f 0%,#1a1a1a 15%,#252525 45%,#232323 60%,#161616 85%,#101010 100%)"></div>
<div class="t" style="left:790px;width:100px;text-align:center;top:508px;font-size:14px;color:#f0f0f0;transform-origin:50px 0;transform:scaleX(0.82)">A3</div>
<div class="ab" style="left:856px;top:500px;width:28px;height:33px;border-radius:6px;background:linear-gradient(to bottom,#353535 0%,#3a5464 22%,#4a7d9a 42%,#4a7d9a 58%,#3a5464 78%,#353535 100%)"></div>
<div class="ab" style="left:858px;top:502px;width:24px;height:29px;border-radius:4px;background:linear-gradient(to bottom,#0f0f0f 0%,#1a1a1a 15%,#252525 45%,#232323 60%,#161616 85%,#101010 100%)"></div>
<div class="t" style="left:820px;width:100px;text-align:center;top:508px;font-size:14px;color:#f0f0f0;transform-origin:50px 0;transform:scaleX(0.82)">Bb3</div>
<div class="ab" style="left:886px;top:500px;width:28px;height:33px;border-radius:4px;background:linear-gradient(to bottom,#111c23 0%,#1f3e50 22%,#2d5f7c 45%,#2d5f7c 58%,#1f3e50 80%,#0f181e 100%)"></div>
<div class="ab" style="left:886px;top:500px;width:28px;height:33px;border-radius:4px;background:linear-gradient(to right,rgba(0,0,0,.25),rgba(0,0,0,0) 22%,rgba(0,0,0,0) 78%,rgba(0,0,0,.25))"></div>
<div class="t" style="left:850px;width:100px;text-align:center;top:508px;font-size:14px;color:#f0f0f0;transform-origin:50px 0;transform:scaleX(0.82)">B3</div>
<div class="ab" style="left:916px;top:500px;width:28px;height:33px;border-radius:4px;background:linear-gradient(to bottom,#0f0f0f 0%,#1a1a1a 15%,#252525 45%,#232323 60%,#161616 85%,#101010 100%)"></div>
<div class="t" style="left:880px;width:100px;text-align:center;top:508px;font-size:14px;color:#f0f0f0;transform-origin:50px 0;transform:scaleX(0.82)">C4</div>
<div class="ab" style="left:946px;top:500px;width:28px;height:33px;border-radius:4px;background:linear-gradient(to bottom,#0f0f0f 0%,#1a1a1a 15%,#252525 45%,#232323 60%,#161616 85%,#101010 100%)"></div>
<div class="t" style="left:910px;width:100px;text-align:center;top:508px;font-size:14px;color:#f0f0f0;transform-origin:50px 0;transform:scaleX(0.82)">Db4</div>
<div class="ab" style="left:976px;top:500px;width:28px;height:33px;border-radius:4px;background:linear-gradient(to bottom,#0f0f0f 0%,#1a1a1a 15%,#252525 45%,#232323 60%,#161616 85%,#101010 100%)"></div>
<div class="t" style="left:940px;width:100px;text-align:center;top:508px;font-size:14px;color:#f0f0f0;transform-origin:50px 0;transform:scaleX(0.82)">D4</div>
<div class="ab" style="left:1006px;top:500px;width:28px;height:33px;border-radius:6px;background:linear-gradient(to bottom,#353535 0%,#3a5464 22%,#4a7d9a 42%,#4a7d9a 58%,#3a5464 78%,#353535 100%)"></div>
<div class="ab" style="left:1008px;top:502px;width:24px;height:29px;border-radius:4px;background:linear-gradient(to bottom,#0f0f0f 0%,#1a1a1a 15%,#252525 45%,#232323 60%,#161616 85%,#101010 100%)"></div>
<div class="t" style="left:970px;width:100px;text-align:center;top:508px;font-size:14px;color:#f0f0f0;transform-origin:50px 0;transform:scaleX(0.82)">Eb4</div>
<div class="ab" style="left:556px;top:536px;width:28px;height:33px;border-radius:4px;background:linear-gradient(to bottom,#0f0f0f 0%,#1a1a1a 15%,#252525 45%,#232323 60%,#161616 85%,#101010 100%)"></div>
<div class="t" style="left:520px;width:100px;text-align:center;top:544px;font-size:14px;color:#f0f0f0;transform-origin:50px 0;transform:scaleX(0.82)">E4</div>
<div class="ab" style="left:586px;top:536px;width:28px;height:33px;border-radius:4px;background:linear-gradient(to bottom,#0f0f0f 0%,#1a1a1a 15%,#252525 45%,#232323 60%,#161616 85%,#101010 100%)"></div>
<div class="t" style="left:550px;width:100px;text-align:center;top:544px;font-size:14px;color:#f0f0f0;transform-origin:50px 0;transform:scaleX(0.82)">F4</div>
<div class="ab" style="left:616px;top:536px;width:28px;height:33px;border-radius:4px;background:linear-gradient(to bottom,#0f0f0f 0%,#1a1a1a 15%,#252525 45%,#232323 60%,#161616 85%,#101010 100%)"></div>
<div class="t" style="left:580px;width:100px;text-align:center;top:544px;font-size:14px;color:#f0f0f0;transform-origin:50px 0;transform:scaleX(0.82)">Gb4</div>
<div class="ab" style="left:646px;top:536px;width:28px;height:33px;border-radius:4px;background:linear-gradient(to bottom,#0f0f0f 0%,#1a1a1a 15%,#252525 45%,#232323 60%,#161616 85%,#101010 100%)"></div>
<div class="t" style="left:610px;width:100px;text-align:center;top:544px;font-size:14px;color:#f0f0f0;transform-origin:50px 0;transform:scaleX(0.82)">G4</div>
<div class="ab" style="left:676px;top:536px;width:28px;height:33px;border-radius:6px;background:linear-gradient(to bottom,#353535 0%,#3a5464 22%,#4a7d9a 42%,#4a7d9a 58%,#3a5464 78%,#353535 100%)"></div>
<div class="ab" style="left:678px;top:538px;width:24px;height:29px;border-radius:4px;background:linear-gradient(to bottom,#0f0f0f 0%,#1a1a1a 15%,#252525 45%,#232323 60%,#161616 85%,#101010 100%)"></div>
<div class="t" style="left:640px;width:100px;text-align:center;top:544px;font-size:14px;color:#f0f0f0;transform-origin:50px 0;transform:scaleX(0.82)">Ab4</div>
<div class="ab" style="left:706px;top:536px;width:28px;height:33px;border-radius:4px;background:linear-gradient(to bottom,#0f0f0f 0%,#1a1a1a 15%,#252525 45%,#232323 60%,#161616 85%,#101010 100%)"></div>
<div class="t" style="left:670px;width:100px;text-align:center;top:544px;font-size:14px;color:#f0f0f0;transform-origin:50px 0;transform:scaleX(0.82)">A4</div>
<div class="ab" style="left:736px;top:536px;width:28px;height:33px;border-radius:6px;background:linear-gradient(to bottom,#353535 0%,#3a5464 22%,#4a7d9a 42%,#4a7d9a 58%,#3a5464 78%,#353535 100%)"></div>
<div class="ab" style="left:738px;top:538px;width:24px;height:29px;border-radius:4px;background:linear-gradient(to bottom,#0f0f0f 0%,#1a1a1a 15%,#252525 45%,#232323 60%,#161616 85%,#101010 100%)"></div>
<div class="t" style="left:700px;width:100px;text-align:center;top:544px;font-size:14px;color:#f0f0f0;transform-origin:50px 0;transform:scaleX(0.82)">Bb4</div>
<div class="ab" style="left:766px;top:536px;width:28px;height:33px;border-radius:4px;background:linear-gradient(to bottom,#111c23 0%,#1f3e50 22%,#2d5f7c 45%,#2d5f7c 58%,#1f3e50 80%,#0f181e 100%)"></div>
<div class="ab" style="left:766px;top:536px;width:28px;height:33px;border-radius:4px;background:linear-gradient(to right,rgba(0,0,0,.25),rgba(0,0,0,0) 22%,rgba(0,0,0,0) 78%,rgba(0,0,0,.25))"></div>
<div class="t" style="left:730px;width:100px;text-align:center;top:544px;font-size:14px;color:#f0f0f0;transform-origin:50px 0;transform:scaleX(0.82)">B4</div>
<div class="ab" style="left:796px;top:536px;width:28px;height:33px;border-radius:4px;background:linear-gradient(to bottom,#0f0f0f 0%,#1a1a1a 15%,#252525 45%,#232323 60%,#161616 85%,#101010 100%)"></div>
<div class="t" style="left:760px;width:100px;text-align:center;top:544px;font-size:14px;color:#f0f0f0;transform-origin:50px 0;transform:scaleX(0.82)">C5</div>
<div class="ab" style="left:826px;top:536px;width:28px;height:33px;border-radius:4px;background:linear-gradient(to bottom,#0f0f0f 0%,#1a1a1a 15%,#252525 45%,#232323 60%,#161616 85%,#101010 100%)"></div>
<div class="t" style="left:790px;width:100px;text-align:center;top:544px;font-size:14px;color:#f0f0f0;transform-origin:50px 0;transform:scaleX(0.82)">Db5</div>
<div class="ab" style="left:856px;top:536px;width:28px;height:33px;border-radius:4px;background:linear-gradient(to bottom,#0f0f0f 0%,#1a1a1a 15%,#252525 45%,#232323 60%,#161616 85%,#101010 100%)"></div>
<div class="t" style="left:820px;width:100px;text-align:center;top:544px;font-size:14px;color:#f0f0f0;transform-origin:50px 0;transform:scaleX(0.82)">D5</div>
<div class="ab" style="left:886px;top:536px;width:28px;height:33px;border-radius:6px;background:linear-gradient(to bottom,#353535 0%,#3a5464 22%,#4a7d9a 42%,#4a7d9a 58%,#3a5464 78%,#353535 100%)"></div>
<div class="ab" style="left:888px;top:538px;width:24px;height:29px;border-radius:4px;background:linear-gradient(to bottom,#0f0f0f 0%,#1a1a1a 15%,#252525 45%,#232323 60%,#161616 85%,#101010 100%)"></div>
<div class="t" style="left:850px;width:100px;text-align:center;top:544px;font-size:14px;color:#f0f0f0;transform-origin:50px 0;transform:scaleX(0.82)">Eb5</div>
<div class="ab" style="left:916px;top:536px;width:28px;height:33px;border-radius:4px;background:linear-gradient(to bottom,#0f0f0f 0%,#1a1a1a 15%,#252525 45%,#232323 60%,#161616 85%,#101010 100%)"></div>
<div class="t" style="left:880px;width:100px;text-align:center;top:544px;font-size:14px;color:#f0f0f0;transform-origin:50px 0;transform:scaleX(0.82)">E5</div>
<div class="ab" style="left:946px;top:536px;width:28px;height:33px;border-radius:4px;background:linear-gradient(to bottom,#0f0f0f 0%,#1a1a1a 15%,#252525 45%,#232323 60%,#161616 85%,#101010 100%)"></div>
<div class="t" style="left:910px;width:100px;text-align:center;top:544px;font-size:14px;color:#f0f0f0;transform-origin:50px 0;transform:scaleX(0.82)">F5</div>
<div class="ab" style="left:976px;top:536px;width:28px;height:33px;border-radius:4px;background:linear-gradient(to bottom,#0f0f0f 0%,#1a1a1a 15%,#252525 45%,#232323 60%,#161616 85%,#101010 100%)"></div>
<div class="t" style="left:940px;width:100px;text-align:center;top:544px;font-size:14px;color:#f0f0f0;transform-origin:50px 0;transform:scaleX(0.82)">Gb5</div>
<div class="ab" style="left:1006px;top:536px;width:28px;height:33px;border-radius:4px;background:linear-gradient(to bottom,#0f0f0f 0%,#1a1a1a 15%,#252525 45%,#232323 60%,#161616 85%,#101010 100%)"></div>
<div class="t" style="left:970px;width:100px;text-align:center;top:544px;font-size:14px;color:#f0f0f0;transform-origin:50px 0;transform:scaleX(0.82)">G5</div>
<div class="ab" style="left:556px;top:572px;width:28px;height:33px;border-radius:6px;background:linear-gradient(to bottom,#353535 0%,#3a5464 22%,#4a7d9a 42%,#4a7d9a 58%,#3a5464 78%,#353535 100%)"></div>
<div class="ab" style="left:558px;top:574px;width:24px;height:29px;border-radius:4px;background:linear-gradient(to bottom,#0f0f0f 0%,#1a1a1a 15%,#252525 45%,#232323 60%,#161616 85%,#101010 100%)"></div>
<div class="t" style="left:520px;width:100px;text-align:center;top:580px;font-size:14px;color:#f0f0f0;transform-origin:50px 0;transform:scaleX(0.82)">Ab5</div>
<div class="ab" style="left:586px;top:572px;width:28px;height:33px;border-radius:4px;background:linear-gradient(to bottom,#0f0f0f 0%,#1a1a1a 15%,#252525 45%,#232323 60%,#161616 85%,#101010 100%)"></div>
<div class="t" style="left:550px;width:100px;text-align:center;top:580px;font-size:14px;color:#f0f0f0;transform-origin:50px 0;transform:scaleX(0.82)">A5</div>
<div class="ab" style="left:616px;top:572px;width:28px;height:33px;border-radius:4px;background:linear-gradient(to bottom,#0f0f0f 0%,#1a1a1a 15%,#252525 45%,#232323 60%,#161616 85%,#101010 100%)"></div>
<div class="t" style="left:580px;width:100px;text-align:center;top:580px;font-size:14px;color:#f0f0f0;transform-origin:50px 0;transform:scaleX(0.82)">Bb5</div>
<div class="ab" style="left:646px;top:572px;width:28px;height:33px;border-radius:4px;background:linear-gradient(to bottom,#0f0f0f 0%,#1a1a1a 15%,#252525 45%,#232323 60%,#161616 85%,#101010 100%)"></div>
<div class="t" style="left:610px;width:100px;text-align:center;top:580px;font-size:14px;color:#f0f0f0;transform-origin:50px 0;transform:scaleX(0.82)">B5</div>
<div class="ab" style="left:676px;top:572px;width:28px;height:33px;border-radius:4px;background:linear-gradient(to bottom,#0f0f0f 0%,#1a1a1a 15%,#252525 45%,#232323 60%,#161616 85%,#101010 100%)"></div>
<div class="t" style="left:640px;width:100px;text-align:center;top:580px;font-size:14px;color:#f0f0f0;transform-origin:50px 0;transform:scaleX(0.82)">C6</div>
<div class="ab" style="left:706px;top:572px;width:28px;height:33px;border-radius:4px;background:linear-gradient(to bottom,#0f0f0f 0%,#1a1a1a 15%,#252525 45%,#232323 60%,#161616 85%,#101010 100%)"></div>
<div class="t" style="left:670px;width:100px;text-align:center;top:580px;font-size:14px;color:#f0f0f0;transform-origin:50px 0;transform:scaleX(0.82)">Db6</div>
<div class="ab" style="left:736px;top:572px;width:28px;height:33px;border-radius:4px;background:linear-gradient(to bottom,#0f0f0f 0%,#1a1a1a 15%,#252525 45%,#232323 60%,#161616 85%,#101010 100%)"></div>
<div class="t" style="left:700px;width:100px;text-align:center;top:580px;font-size:14px;color:#f0f0f0;transform-origin:50px 0;transform:scaleX(0.82)">D6</div>
<div class="ab" style="left:766px;top:572px;width:28px;height:33px;border-radius:6px;background:linear-gradient(to bottom,#353535 0%,#3a5464 22%,#4a7d9a 42%,#4a7d9a 58%,#3a5464 78%,#353535 100%)"></div>
<div class="ab" style="left:768px;top:574px;width:24px;height:29px;border-radius:4px;background:linear-gradient(to bottom,#0f0f0f 0%,#1a1a1a 15%,#252525 45%,#232323 60%,#161616 85%,#101010 100%)"></div>
<div class="t" style="left:730px;width:100px;text-align:center;top:580px;font-size:14px;color:#f0f0f0;transform-origin:50px 0;transform:scaleX(0.82)">Eb6</div>
<div class="ab" style="left:796px;top:572px;width:28px;height:33px;border-radius:4px;background:linear-gradient(to bottom,#0f0f0f 0%,#1a1a1a 15%,#252525 45%,#232323 60%,#161616 85%,#101010 100%)"></div>
<div class="t" style="left:760px;width:100px;text-align:center;top:580px;font-size:14px;color:#f0f0f0;transform-origin:50px 0;transform:scaleX(0.82)">E6</div>
<div class="ab" style="left:826px;top:572px;width:28px;height:33px;border-radius:4px;background:linear-gradient(to bottom,#0f0f0f 0%,#1a1a1a 15%,#252525 45%,#232323 60%,#161616 85%,#101010 100%)"></div>
<div class="t" style="left:790px;width:100px;text-align:center;top:580px;font-size:14px;color:#f0f0f0;transform-origin:50px 0;transform:scaleX(0.82)">F6</div>
<div class="ab" style="left:856px;top:572px;width:28px;height:33px;border-radius:4px;background:linear-gradient(to bottom,#0f0f0f 0%,#1a1a1a 15%,#252525 45%,#232323 60%,#161616 85%,#101010 100%)"></div>
<div class="t" style="left:820px;width:100px;text-align:center;top:580px;font-size:14px;color:#f0f0f0;transform-origin:50px 0;transform:scaleX(0.82)">Gb6</div>
<div class="ab" style="left:886px;top:572px;width:28px;height:33px;border-radius:4px;background:linear-gradient(to bottom,#0f0f0f 0%,#1a1a1a 15%,#252525 45%,#232323 60%,#161616 85%,#101010 100%)"></div>
<div class="t" style="left:850px;width:100px;text-align:center;top:580px;font-size:14px;color:#f0f0f0;transform-origin:50px 0;transform:scaleX(0.82)">G6</div>
<div class="ab" style="left:916px;top:572px;width:28px;height:33px;border-radius:6px;background:linear-gradient(to bottom,#353535 0%,#3a5464 22%,#4a7d9a 42%,#4a7d9a 58%,#3a5464 78%,#353535 100%)"></div>
<div class="ab" style="left:918px;top:574px;width:24px;height:29px;border-radius:4px;background:linear-gradient(to bottom,#0f0f0f 0%,#1a1a1a 15%,#252525 45%,#232323 60%,#161616 85%,#101010 100%)"></div>
<div class="t" style="left:880px;width:100px;text-align:center;top:580px;font-size:14px;color:#f0f0f0;transform-origin:50px 0;transform:scaleX(0.82)">Ab6</div>
<div class="ab" style="left:946px;top:572px;width:28px;height:33px;border-radius:4px;background:linear-gradient(to bottom,#0f0f0f 0%,#1a1a1a 15%,#252525 45%,#232323 60%,#161616 85%,#101010 100%)"></div>
<div class="t" style="left:910px;width:100px;text-align:center;top:580px;font-size:14px;color:#f0f0f0;transform-origin:50px 0;transform:scaleX(0.82)">A6</div>
<div class="ab" style="left:976px;top:572px;width:28px;height:33px;border-radius:4px;background:linear-gradient(to bottom,#0f0f0f 0%,#1a1a1a 15%,#252525 45%,#232323 60%,#161616 85%,#101010 100%)"></div>
<div class="t" style="left:940px;width:100px;text-align:center;top:580px;font-size:14px;color:#f0f0f0;transform-origin:50px 0;transform:scaleX(0.82)">Bb6</div>
<div class="ab" style="left:1006px;top:572px;width:28px;height:33px;border-radius:4px;background:linear-gradient(to bottom,#0f0f0f 0%,#1a1a1a 15%,#252525 45%,#232323 60%,#161616 85%,#101010 100%)"></div>
<div class="t" style="left:970px;width:100px;text-align:center;top:580px;font-size:14px;color:#f0f0f0;transform-origin:50px 0;transform:scaleX(0.82)">B6</div>
<div class="ab" style="left:556px;top:608px;width:28px;height:33px;border-radius:4px;background:linear-gradient(to bottom,#0f0f0f 0%,#1a1a1a 15%,#252525 45%,#232323 60%,#161616 85%,#101010 100%)"></div>
<div class="t" style="left:520px;width:100px;text-align:center;top:616px;font-size:14px;color:#f0f0f0;transform-origin:50px 0;transform:scaleX(0.82)">C7</div>
<div class="ab" style="left:586px;top:608px;width:28px;height:33px;border-radius:4px;background:linear-gradient(to bottom,#0f0f0f 0%,#1a1a1a 15%,#252525 45%,#232323 60%,#161616 85%,#101010 100%)"></div>
<div class="t" style="left:550px;width:100px;text-align:center;top:616px;font-size:14px;color:#f0f0f0;transform-origin:50px 0;transform:scaleX(0.82)">Db7</div>
<div class="ab" style="left:616px;top:608px;width:28px;height:33px;border-radius:4px;background:linear-gradient(to bottom,#0f0f0f 0%,#1a1a1a 15%,#252525 45%,#232323 60%,#161616 85%,#101010 100%)"></div>
<div class="t" style="left:580px;width:100px;text-align:center;top:616px;font-size:14px;color:#f0f0f0;transform-origin:50px 0;transform:scaleX(0.82)">D7</div>
<div class="ab" style="left:646px;top:608px;width:28px;height:33px;border-radius:4px;background:linear-gradient(to bottom,#0f0f0f 0%,#1a1a1a 15%,#252525 45%,#232323 60%,#161616 85%,#101010 100%)"></div>
<div class="t" style="left:610px;width:100px;text-align:center;top:616px;font-size:14px;color:#f0f0f0;transform-origin:50px 0;transform:scaleX(0.82)">Eb7</div>
<div class="ab" style="left:676px;top:608px;width:28px;height:33px;border-radius:4px;background:linear-gradient(to bottom,#0f0f0f 0%,#1a1a1a 15%,#252525 45%,#232323 60%,#161616 85%,#101010 100%)"></div>
<div class="t" style="left:640px;width:100px;text-align:center;top:616px;font-size:14px;color:#f0f0f0;transform-origin:50px 0;transform:scaleX(0.82)">E7</div>
<div class="ab" style="left:706px;top:608px;width:28px;height:33px;border-radius:4px;background:linear-gradient(to bottom,#0f0f0f 0%,#1a1a1a 15%,#252525 45%,#232323 60%,#161616 85%,#101010 100%)"></div>
<div class="t" style="left:670px;width:100px;text-align:center;top:616px;font-size:14px;color:#f0f0f0;transform-origin:50px 0;transform:scaleX(0.82)">F7</div>
<div class="ab" style="left:736px;top:608px;width:28px;height:33px;border-radius:4px;background:linear-gradient(to bottom,#0f0f0f 0%,#1a1a1a 15%,#252525 45%,#232323 60%,#161616 85%,#101010 100%)"></div>
<div class="t" style="left:700px;width:100px;text-align:center;top:616px;font-size:14px;color:#f0f0f0;transform-origin:50px 0;transform:scaleX(0.82)">Gb7</div>
<div class="ab" style="left:766px;top:608px;width:28px;height:33px;border-radius:4px;background:linear-gradient(to bottom,#0f0f0f 0%,#1a1a1a 15%,#252525 45%,#232323 60%,#161616 85%,#101010 100%)"></div>
<div class="t" style="left:730px;width:100px;text-align:center;top:616px;font-size:14px;color:#f0f0f0;transform-origin:50px 0;transform:scaleX(0.82)">G7</div>
<div class="ab" style="left:796px;top:608px;width:28px;height:33px;border-radius:4px;background:linear-gradient(to bottom,#0f0f0f 0%,#1a1a1a 15%,#252525 45%,#232323 60%,#161616 85%,#101010 100%)"></div>
<div class="t" style="left:760px;width:100px;text-align:center;top:616px;font-size:14px;color:#f0f0f0;transform-origin:50px 0;transform:scaleX(0.82)">Ab7</div>
<div class="ab" style="left:826px;top:608px;width:28px;height:33px;border-radius:4px;background:linear-gradient(to bottom,#0f0f0f 0%,#1a1a1a 15%,#252525 45%,#232323 60%,#161616 85%,#101010 100%)"></div>
<div class="t" style="left:790px;width:100px;text-align:center;top:616px;font-size:14px;color:#f0f0f0;transform-origin:50px 0;transform:scaleX(0.82)">A7</div>
<div class="ab" style="left:856px;top:608px;width:28px;height:33px;border-radius:4px;background:linear-gradient(to bottom,#0f0f0f 0%,#1a1a1a 15%,#252525 45%,#232323 60%,#161616 85%,#101010 100%)"></div>
<div class="t" style="left:820px;width:100px;text-align:center;top:616px;font-size:14px;color:#f0f0f0;transform-origin:50px 0;transform:scaleX(0.82)">Bb7</div>
<div class="ab" style="left:886px;top:608px;width:28px;height:33px;border-radius:4px;background:linear-gradient(to bottom,#0f0f0f 0%,#1a1a1a 15%,#252525 45%,#232323 60%,#161616 85%,#101010 100%)"></div>
<div class="t" style="left:850px;width:100px;text-align:center;top:616px;font-size:14px;color:#f0f0f0;transform-origin:50px 0;transform:scaleX(0.82)">B7</div>
<div class="ab" style="left:916px;top:608px;width:28px;height:33px;border-radius:4px;background:linear-gradient(to bottom,#0f0f0f 0%,#1a1a1a 15%,#252525 45%,#232323 60%,#161616 85%,#101010 100%)"></div>
<div class="t" style="left:880px;width:100px;text-align:center;top:616px;font-size:14px;color:#f0f0f0;transform-origin:50px 0;transform:scaleX(0.82)">C8</div>
<div class="ab" style="left:946px;top:608px;width:28px;height:33px;border-radius:4px;background:linear-gradient(to bottom,#0f0f0f 0%,#1a1a1a 15%,#252525 45%,#232323 60%,#161616 85%,#101010 100%)"></div>
<div class="t" style="left:910px;width:100px;text-align:center;top:616px;font-size:14px;color:#f0f0f0;transform-origin:50px 0;transform:scaleX(0.82)">Db8</div>
<div class="ab" style="left:976px;top:608px;width:28px;height:33px;border-radius:4px;background:linear-gradient(to bottom,#0f0f0f 0%,#1a1a1a 15%,#252525 45%,#232323 60%,#161616 85%,#101010 100%)"></div>
<div class="t" style="left:940px;width:100px;text-align:center;top:616px;font-size:14px;color:#f0f0f0;transform-origin:50px 0;transform:scaleX(0.82)">D8</div>
<div class="ab" style="left:1006px;top:608px;width:28px;height:33px;border-radius:4px;background:linear-gradient(to bottom,#0f0f0f 0%,#1a1a1a 15%,#252525 45%,#232323 60%,#161616 85%,#101010 100%)"></div>
<div class="t" style="left:970px;width:100px;text-align:center;top:616px;font-size:14px;color:#f0f0f0;transform-origin:50px 0;transform:scaleX(0.82)">Eb8</div>
<div class="ab" style="left:556px;top:644px;width:28px;height:33px;border-radius:4px;background:linear-gradient(to bottom,#0f0f0f 0%,#1a1a1a 15%,#252525 45%,#232323 60%,#161616 85%,#101010 100%)"></div>
<div class="t" style="left:520px;width:100px;text-align:center;top:652px;font-size:14px;color:#f0f0f0;transform-origin:50px 0;transform:scaleX(0.82)">E8</div>
<div class="ab" style="left:586px;top:644px;width:28px;height:33px;border-radius:4px;background:linear-gradient(to bottom,#0f0f0f 0%,#1a1a1a 15%,#252525 45%,#232323 60%,#161616 85%,#101010 100%)"></div>
<div class="t" style="left:550px;width:100px;text-align:center;top:652px;font-size:14px;color:#f0f0f0;transform-origin:50px 0;transform:scaleX(0.82)">F8</div>
<div class="ab" style="left:616px;top:644px;width:28px;height:33px;border-radius:4px;background:linear-gradient(to bottom,#0f0f0f 0%,#1a1a1a 15%,#252525 45%,#232323 60%,#161616 85%,#101010 100%)"></div>
<div class="t" style="left:580px;width:100px;text-align:center;top:652px;font-size:14px;color:#f0f0f0;transform-origin:50px 0;transform:scaleX(0.82)">Gb8</div>
<div class="ab" style="left:646px;top:644px;width:28px;height:33px;border-radius:4px;background:linear-gradient(to bottom,#0f0f0f 0%,#1a1a1a 15%,#252525 45%,#232323 60%,#161616 85%,#101010 100%)"></div>
<div class="t" style="left:610px;width:100px;text-align:center;top:652px;font-size:14px;color:#f0f0f0;transform-origin:50px 0;transform:scaleX(0.82)">G8</div>
<div class="ab" style="left:676px;top:644px;width:28px;height:33px;border-radius:4px;background:linear-gradient(to bottom,#0f0f0f 0%,#1a1a1a 15%,#252525 45%,#232323 60%,#161616 85%,#101010 100%)"></div>
<div class="t" style="left:640px;width:100px;text-align:center;top:652px;font-size:14px;color:#f0f0f0;transform-origin:50px 0;transform:scaleX(0.82)">Ab8</div>
<div class="ab" style="left:706px;top:644px;width:28px;height:33px;border-radius:4px;background:linear-gradient(to bottom,#0f0f0f 0%,#1a1a1a 15%,#252525 45%,#232323 60%,#161616 85%,#101010 100%)"></div>
<div class="t" style="left:670px;width:100px;text-align:center;top:652px;font-size:14px;color:#f0f0f0;transform-origin:50px 0;transform:scaleX(0.82)">A8</div>
<div class="ab" style="left:736px;top:644px;width:28px;height:33px;border-radius:4px;background:linear-gradient(to bottom,#0f0f0f 0%,#1a1a1a 15%,#252525 45%,#232323 60%,#161616 85%,#101010 100%)"></div>
<div class="t" style="left:700px;width:100px;text-align:center;top:652px;font-size:14px;color:#f0f0f0;transform-origin:50px 0;transform:scaleX(0.82)">Bb8</div>
<div class="ab" style="left:766px;top:644px;width:28px;height:33px;border-radius:4px;background:linear-gradient(to bottom,#0f0f0f 0%,#1a1a1a 15%,#252525 45%,#232323 60%,#161616 85%,#101010 100%)"></div>
<div class="t" style="left:730px;width:100px;text-align:center;top:652px;font-size:14px;color:#f0f0f0;transform-origin:50px 0;transform:scaleX(0.82)">B8</div>
<div class="ab" style="left:796px;top:644px;width:28px;height:33px;border-radius:4px;background:linear-gradient(to bottom,#0f0f0f 0%,#1a1a1a 15%,#252525 45%,#232323 60%,#161616 85%,#101010 100%)"></div>
<div class="t" style="left:760px;width:100px;text-align:center;top:652px;font-size:14px;color:#f0f0f0;transform-origin:50px 0;transform:scaleX(0.82)">C9</div>
<div class="ab" style="left:826px;top:644px;width:28px;height:33px;border-radius:4px;background:linear-gradient(to bottom,#0f0f0f 0%,#1a1a1a 15%,#252525 45%,#232323 60%,#161616 85%,#101010 100%)"></div>
<div class="t" style="left:790px;width:100px;text-align:center;top:652px;font-size:14px;color:#f0f0f0;transform-origin:50px 0;transform:scaleX(0.82)">Db9</div>
<div class="ab" style="left:856px;top:644px;width:28px;height:33px;border-radius:4px;background:linear-gradient(to bottom,#0f0f0f 0%,#1a1a1a 15%,#252525 45%,#232323 60%,#161616 85%,#101010 100%)"></div>
<div class="t" style="left:820px;width:100px;text-align:center;top:652px;font-size:14px;color:#f0f0f0;transform-origin:50px 0;transform:scaleX(0.82)">D9</div>
<div class="ab" style="left:886px;top:644px;width:28px;height:33px;border-radius:4px;background:linear-gradient(to bottom,#0f0f0f 0%,#1a1a1a 15%,#252525 45%,#232323 60%,#161616 85%,#101010 100%)"></div>
<div class="t" style="left:850px;width:100px;text-align:center;top:652px;font-size:14px;color:#f0f0f0;transform-origin:50px 0;transform:scaleX(0.82)">Eb9</div>
<div class="ab" style="left:916px;top:644px;width:28px;height:33px;border-radius:4px;background:linear-gradient(to bottom,#0f0f0f 0%,#1a1a1a 15%,#252525 45%,#232323 60%,#161616 85%,#101010 100%)"></div>
<div class="t" style="left:880px;width:100px;text-align:center;top:652px;font-size:14px;color:#f0f0f0;transform-origin:50px 0;transform:scaleX(0.82)">E9</div>
<div class="ab" style="left:946px;top:644px;width:28px;height:33px;border-radius:4px;background:linear-gradient(to bottom,#0f0f0f 0%,#1a1a1a 15%,#252525 45%,#232323 60%,#161616 85%,#101010 100%)"></div>
<div class="t" style="left:910px;width:100px;text-align:center;top:652px;font-size:14px;color:#f0f0f0;transform-origin:50px 0;transform:scaleX(0.82)">F9</div>
<div class="ab" style="left:976px;top:644px;width:28px;height:33px;border-radius:4px;background:linear-gradient(to bottom,#0f0f0f 0%,#1a1a1a 15%,#252525 45%,#232323 60%,#161616 85%,#101010 100%)"></div>
<div class="t" style="left:940px;width:100px;text-align:center;top:652px;font-size:14px;color:#f0f0f0;transform-origin:50px 0;transform:scaleX(0.82)">Gb9</div>
<div class="ab" style="left:1006px;top:644px;width:28px;height:33px;border-radius:4px;background:linear-gradient(to bottom,#0f0f0f 0%,#1a1a1a 15%,#252525 45%,#232323 60%,#161616 85%,#101010 100%)"></div>
<div class="t" style="left:970px;width:100px;text-align:center;top:652px;font-size:14px;color:#f0f0f0;transform-origin:50px 0;transform:scaleX(0.82)">G9</div>
<svg style="left:63px;top:113px" width="16" height="13" shape-rendering="crispEdges"><rect x="9" y="0" width="6" height="10" fill="#f0f0f0"/><path d="M10 2.5 H14 M10 4.5 H14 M10 6.5 H14 M10 8.5 H13" stroke="#0d0d0d" stroke-width="1"/><path d="M0 3.5 H9 M0 5.5 H9 M0 7.5 H9 M0 9.5 H9 M4.5 3 V11" stroke="#f0f0f0" stroke-width="1" opacity=".9"/><circle cx="3.6" cy="11.2" r="1.6" fill="#f0f0f0" shape-rendering="auto"/><circle cx="8.2" cy="8.8" r="1.5" fill="#f0f0f0" shape-rendering="auto"/><circle cx="13.6" cy="8.8" r="1.5" fill="#f0f0f0" shape-rendering="auto"/></svg>
<div class="t" style="left:84px;top:111px;font-size:14px;color:#f0f0f0;transform-origin:0 0;transform:scaleX(0.9286);">9. D 2PRE.mid</div>
<svg style="left:63px;top:147px" width="16" height="13" shape-rendering="crispEdges"><rect x="9" y="0" width="6" height="10" fill="#f0f0f0"/><path d="M10 2.5 H14 M10 4.5 H14 M10 6.5 H14 M10 8.5 H13" stroke="#0d0d0d" stroke-width="1"/><path d="M0 3.5 H9 M0 5.5 H9 M0 7.5 H9 M0 9.5 H9 M4.5 3 V11" stroke="#f0f0f0" stroke-width="1" opacity=".9"/><circle cx="3.6" cy="11.2" r="1.6" fill="#f0f0f0" shape-rendering="auto"/><circle cx="8.2" cy="8.8" r="1.5" fill="#f0f0f0" shape-rendering="auto"/><circle cx="13.6" cy="8.8" r="1.5" fill="#f0f0f0" shape-rendering="auto"/></svg>
<div class="t" style="left:84px;top:145px;font-size:14px;color:#f0f0f0;transform-origin:0 0;transform:scaleX(0.9286);">10. D 4INV.mid</div>
<svg style="left:63px;top:181px" width="16" height="13" shape-rendering="crispEdges"><rect x="9" y="0" width="6" height="10" fill="#f0f0f0"/><path d="M10 2.5 H14 M10 4.5 H14 M10 6.5 H14 M10 8.5 H13" stroke="#0d0d0d" stroke-width="1"/><path d="M0 3.5 H9 M0 5.5 H9 M0 7.5 H9 M0 9.5 H9 M4.5 3 V11" stroke="#f0f0f0" stroke-width="1" opacity=".9"/><circle cx="3.6" cy="11.2" r="1.6" fill="#f0f0f0" shape-rendering="auto"/><circle cx="8.2" cy="8.8" r="1.5" fill="#f0f0f0" shape-rendering="auto"/><circle cx="13.6" cy="8.8" r="1.5" fill="#f0f0f0" shape-rendering="auto"/></svg>
<div class="t" style="left:84px;top:179px;font-size:14px;color:#f0f0f0;transform-origin:0 0;transform:scaleX(0.9286);">11. Hotel California.mid</div>
<svg style="left:63px;top:215px" width="16" height="13" shape-rendering="crispEdges"><rect x="9" y="0" width="6" height="10" fill="#f0f0f0"/><path d="M10 2.5 H14 M10 4.5 H14 M10 6.5 H14 M10 8.5 H13" stroke="#0d0d0d" stroke-width="1"/><path d="M0 3.5 H9 M0 5.5 H9 M0 7.5 H9 M0 9.5 H9 M4.5 3 V11" stroke="#f0f0f0" stroke-width="1" opacity=".9"/><circle cx="3.6" cy="11.2" r="1.6" fill="#f0f0f0" shape-rendering="auto"/><circle cx="8.2" cy="8.8" r="1.5" fill="#f0f0f0" shape-rendering="auto"/><circle cx="13.6" cy="8.8" r="1.5" fill="#f0f0f0" shape-rendering="auto"/></svg>
<div class="t" style="left:84px;top:213px;font-size:14px;color:#f0f0f0;transform-origin:0 0;transform:scaleX(0.9286);">12. I'll Take You Home Again Kathleen.mid</div>
<svg style="left:63px;top:249px" width="16" height="13" shape-rendering="crispEdges"><rect x="9" y="0" width="6" height="10" fill="#f0f0f0"/><path d="M10 2.5 H14 M10 4.5 H14 M10 6.5 H14 M10 8.5 H13" stroke="#0d0d0d" stroke-width="1"/><path d="M0 3.5 H9 M0 5.5 H9 M0 7.5 H9 M0 9.5 H9 M4.5 3 V11" stroke="#f0f0f0" stroke-width="1" opacity=".9"/><circle cx="3.6" cy="11.2" r="1.6" fill="#f0f0f0" shape-rendering="auto"/><circle cx="8.2" cy="8.8" r="1.5" fill="#f0f0f0" shape-rendering="auto"/><circle cx="13.6" cy="8.8" r="1.5" fill="#f0f0f0" shape-rendering="auto"/></svg>
<div class="t" style="left:84px;top:247px;font-size:14px;color:#f0f0f0;transform-origin:0 0;transform:scaleX(0.9286);">13. Joan of Arc.mid</div>
<svg style="left:63px;top:283px" width="16" height="13" shape-rendering="crispEdges"><rect x="9" y="0" width="6" height="10" fill="#f0f0f0"/><path d="M10 2.5 H14 M10 4.5 H14 M10 6.5 H14 M10 8.5 H13" stroke="#0d0d0d" stroke-width="1"/><path d="M0 3.5 H9 M0 5.5 H9 M0 7.5 H9 M0 9.5 H9 M4.5 3 V11" stroke="#f0f0f0" stroke-width="1" opacity=".9"/><circle cx="3.6" cy="11.2" r="1.6" fill="#f0f0f0" shape-rendering="auto"/><circle cx="8.2" cy="8.8" r="1.5" fill="#f0f0f0" shape-rendering="auto"/><circle cx="13.6" cy="8.8" r="1.5" fill="#f0f0f0" shape-rendering="auto"/></svg>
<div class="t" style="left:84px;top:281px;font-size:14px;color:#f0f0f0;transform-origin:0 0;transform:scaleX(0.9286);">14. Maggie.mid</div>
<svg style="left:63px;top:317px" width="16" height="13" shape-rendering="crispEdges"><rect x="9" y="0" width="6" height="10" fill="#f0f0f0"/><path d="M10 2.5 H14 M10 4.5 H14 M10 6.5 H14 M10 8.5 H13" stroke="#0d0d0d" stroke-width="1"/><path d="M0 3.5 H9 M0 5.5 H9 M0 7.5 H9 M0 9.5 H9 M4.5 3 V11" stroke="#f0f0f0" stroke-width="1" opacity=".9"/><circle cx="3.6" cy="11.2" r="1.6" fill="#f0f0f0" shape-rendering="auto"/><circle cx="8.2" cy="8.8" r="1.5" fill="#f0f0f0" shape-rendering="auto"/><circle cx="13.6" cy="8.8" r="1.5" fill="#f0f0f0" shape-rendering="auto"/></svg>
<div class="t" style="left:84px;top:315px;font-size:14px;color:#f0f0f0;transform-origin:0 0;transform:scaleX(0.9286);">15. Marys.mid</div>
<div class="ab" style="left:57px;top:342px;width:471px;height:30px;border-radius:5px;background:#4a8099"></div>
<svg style="left:63px;top:351px" width="16" height="13" shape-rendering="crispEdges"><rect x="9" y="0" width="6" height="10" fill="#a8dcf0"/><path d="M10 2.5 H14 M10 4.5 H14 M10 6.5 H14 M10 8.5 H13" stroke="#0d0d0d" stroke-width="1"/><path d="M0 3.5 H9 M0 5.5 H9 M0 7.5 H9 M0 9.5 H9 M4.5 3 V11" stroke="#a8dcf0" stroke-width="1" opacity=".9"/><circle cx="3.6" cy="11.2" r="1.6" fill="#a8dcf0" shape-rendering="auto"/><circle cx="8.2" cy="8.8" r="1.5" fill="#a8dcf0" shape-rendering="auto"/><circle cx="13.6" cy="8.8" r="1.5" fill="#a8dcf0" shape-rendering="auto"/></svg>
<div class="t" style="left:84px;top:349px;font-size:14px;color:#a8dcf0;transform-origin:0 0;transform:scaleX(0.9286);">16. Rock.mid</div>
<svg style="left:63px;top:385px" width="16" height="13" shape-rendering="crispEdges"><rect x="9" y="0" width="6" height="10" fill="#f0f0f0"/><path d="M10 2.5 H14 M10 4.5 H14 M10 6.5 H14 M10 8.5 H13" stroke="#0d0d0d" stroke-width="1"/><path d="M0 3.5 H9 M0 5.5 H9 M0 7.5 H9 M0 9.5 H9 M4.5 3 V11" stroke="#f0f0f0" stroke-width="1" opacity=".9"/><circle cx="3.6" cy="11.2" r="1.6" fill="#f0f0f0" shape-rendering="auto"/><circle cx="8.2" cy="8.8" r="1.5" fill="#f0f0f0" shape-rendering="auto"/><circle cx="13.6" cy="8.8" r="1.5" fill="#f0f0f0" shape-rendering="auto"/></svg>
<div class="t" style="left:84px;top:383px;font-size:14px;color:#f0f0f0;transform-origin:0 0;transform:scaleX(0.9286);">17. Rockin.mid</div>
<svg style="left:63px;top:419px" width="16" height="13" shape-rendering="crispEdges"><rect x="9" y="0" width="6" height="10" fill="#f0f0f0"/><path d="M10 2.5 H14 M10 4.5 H14 M10 6.5 H14 M10 8.5 H13" stroke="#0d0d0d" stroke-width="1"/><path d="M0 3.5 H9 M0 5.5 H9 M0 7.5 H9 M0 9.5 H9 M4.5 3 V11" stroke="#f0f0f0" stroke-width="1" opacity=".9"/><circle cx="3.6" cy="11.2" r="1.6" fill="#f0f0f0" shape-rendering="auto"/><circle cx="8.2" cy="8.8" r="1.5" fill="#f0f0f0" shape-rendering="auto"/><circle cx="13.6" cy="8.8" r="1.5" fill="#f0f0f0" shape-rendering="auto"/></svg>
<div class="t" style="left:84px;top:417px;font-size:14px;color:#f0f0f0;transform-origin:0 0;transform:scaleX(0.9286);">18. Roses Are Red.mid</div>
<svg style="left:63px;top:453px" width="16" height="13" shape-rendering="crispEdges"><rect x="9" y="0" width="6" height="10" fill="#f0f0f0"/><path d="M10 2.5 H14 M10 4.5 H14 M10 6.5 H14 M10 8.5 H13" stroke="#0d0d0d" stroke-width="1"/><path d="M0 3.5 H9 M0 5.5 H9 M0 7.5 H9 M0 9.5 H9 M4.5 3 V11" stroke="#f0f0f0" stroke-width="1" opacity=".9"/><circle cx="3.6" cy="11.2" r="1.6" fill="#f0f0f0" shape-rendering="auto"/><circle cx="8.2" cy="8.8" r="1.5" fill="#f0f0f0" shape-rendering="auto"/><circle cx="13.6" cy="8.8" r="1.5" fill="#f0f0f0" shape-rendering="auto"/></svg>
<div class="t" style="left:84px;top:451px;font-size:14px;color:#f0f0f0;transform-origin:0 0;transform:scaleX(0.9286);">19. RRWaltz.mid</div>
<svg style="left:63px;top:487px" width="16" height="13" shape-rendering="crispEdges"><rect x="9" y="0" width="6" height="10" fill="#f0f0f0"/><path d="M10 2.5 H14 M10 4.5 H14 M10 6.5 H14 M10 8.5 H13" stroke="#0d0d0d" stroke-width="1"/><path d="M0 3.5 H9 M0 5.5 H9 M0 7.5 H9 M0 9.5 H9 M4.5 3 V11" stroke="#f0f0f0" stroke-width="1" opacity=".9"/><circle cx="3.6" cy="11.2" r="1.6" fill="#f0f0f0" shape-rendering="auto"/><circle cx="8.2" cy="8.8" r="1.5" fill="#f0f0f0" shape-rendering="auto"/><circle cx="13.6" cy="8.8" r="1.5" fill="#f0f0f0" shape-rendering="auto"/></svg>
<div class="t" style="left:84px;top:485px;font-size:14px;color:#f0f0f0;transform-origin:0 0;transform:scaleX(0.9286);">20. Spin Me Round.mid</div>
<svg style="left:63px;top:521px" width="16" height="13" shape-rendering="crispEdges"><rect x="9" y="0" width="6" height="10" fill="#f0f0f0"/><path d="M10 2.5 H14 M10 4.5 H14 M10 6.5 H14 M10 8.5 H13" stroke="#0d0d0d" stroke-width="1"/><path d="M0 3.5 H9 M0 5.5 H9 M0 7.5 H9 M0 9.5 H9 M4.5 3 V11" stroke="#f0f0f0" stroke-width="1" opacity=".9"/><circle cx="3.6" cy="11.2" r="1.6" fill="#f0f0f0" shape-rendering="auto"/><circle cx="8.2" cy="8.8" r="1.5" fill="#f0f0f0" shape-rendering="auto"/><circle cx="13.6" cy="8.8" r="1.5" fill="#f0f0f0" shape-rendering="auto"/></svg>
<div class="t" style="left:84px;top:519px;font-size:14px;color:#f0f0f0;transform-origin:0 0;transform:scaleX(0.9286);">21. Take A Chance On Me.mid</div>
<svg style="left:63px;top:555px" width="16" height="13" shape-rendering="crispEdges"><rect x="9" y="0" width="6" height="10" fill="#f0f0f0"/><path d="M10 2.5 H14 M10 4.5 H14 M10 6.5 H14 M10 8.5 H13" stroke="#0d0d0d" stroke-width="1"/><path d="M0 3.5 H9 M0 5.5 H9 M0 7.5 H9 M0 9.5 H9 M4.5 3 V11" stroke="#f0f0f0" stroke-width="1" opacity=".9"/><circle cx="3.6" cy="11.2" r="1.6" fill="#f0f0f0" shape-rendering="auto"/><circle cx="8.2" cy="8.8" r="1.5" fill="#f0f0f0" shape-rendering="auto"/><circle cx="13.6" cy="8.8" r="1.5" fill="#f0f0f0" shape-rendering="auto"/></svg>
<div class="t" style="left:84px;top:553px;font-size:14px;color:#f0f0f0;transform-origin:0 0;transform:scaleX(0.9286);">22. The Pink Panther.mid</div>
<svg style="left:63px;top:589px" width="16" height="13" shape-rendering="crispEdges"><rect x="9" y="0" width="6" height="10" fill="#f0f0f0"/><path d="M10 2.5 H14 M10 4.5 H14 M10 6.5 H14 M10 8.5 H13" stroke="#0d0d0d" stroke-width="1"/><path d="M0 3.5 H9 M0 5.5 H9 M0 7.5 H9 M0 9.5 H9 M4.5 3 V11" stroke="#f0f0f0" stroke-width="1" opacity=".9"/><circle cx="3.6" cy="11.2" r="1.6" fill="#f0f0f0" shape-rendering="auto"/><circle cx="8.2" cy="8.8" r="1.5" fill="#f0f0f0" shape-rendering="auto"/><circle cx="13.6" cy="8.8" r="1.5" fill="#f0f0f0" shape-rendering="auto"/></svg>
<div class="t" style="left:84px;top:587px;font-size:14px;color:#f0f0f0;transform-origin:0 0;transform:scaleX(0.9286);">23. Titanic.mid</div>
<svg style="left:63px;top:623px" width="16" height="13" shape-rendering="crispEdges"><rect x="9" y="0" width="6" height="10" fill="#f0f0f0"/><path d="M10 2.5 H14 M10 4.5 H14 M10 6.5 H14 M10 8.5 H13" stroke="#0d0d0d" stroke-width="1"/><path d="M0 3.5 H9 M0 5.5 H9 M0 7.5 H9 M0 9.5 H9 M4.5 3 V11" stroke="#f0f0f0" stroke-width="1" opacity=".9"/><circle cx="3.6" cy="11.2" r="1.6" fill="#f0f0f0" shape-rendering="auto"/><circle cx="8.2" cy="8.8" r="1.5" fill="#f0f0f0" shape-rendering="auto"/><circle cx="13.6" cy="8.8" r="1.5" fill="#f0f0f0" shape-rendering="auto"/></svg>
<div class="t" style="left:84px;top:621px;font-size:14px;color:#f0f0f0;transform-origin:0 0;transform:scaleX(0.9286);">24. We Are The Champions.mid</div>
<div class="ab" style="left:534px;top:113px;width:10px;height:520px;border-radius:5px;background:#333"></div>
<div class="t" style="left:62px;top:637px;font-size:14px;color:#f2f2f2;transform-origin:0 0;transform:scaleX(0.9286);">Playback Mode</div>
<div class="t" style="left:6px;width:200px;text-align:center;top:662px;font-size:14px;color:#f2f2f2;transform-origin:100px 0;transform:scaleX(0.9286);">Once</div>
<div class="t" style="left:104px;width:200px;text-align:center;top:662px;font-size:14px;color:#f2f2f2;transform-origin:100px 0;transform:scaleX(0.9286);">Repeat One</div>
<div class="ab" style="left:256px;top:660px;width:94px;height:20px;border-radius:5px;background:#fff"></div>
<div class="t" style="left:203px;width:200px;text-align:center;top:662px;font-size:14px;color:#000;transform-origin:100px 0;transform:scaleX(0.9286);">Repeat All</div>
<div class="t" style="left:300px;width:200px;text-align:center;top:662px;font-size:14px;color:#f2f2f2;transform-origin:100px 0;transform:scaleX(0.9286);">All Once</div>
<div class="t" style="left:398px;width:200px;text-align:center;top:662px;font-size:14px;color:#f2f2f2;transform-origin:100px 0;transform:scaleX(0.9286);">Random</div>
<div class="t b" style="left:1063px;top:70px;font-size:14px;color:#f2f2f2;transform-origin:0 0;transform:scaleX(0.9286);">Midi Information</div>
<svg style="left:1207px;top:74px" width="13" height="8"><path d="M.5 .5 L6.5 6.5 L12.5 .5" fill="none" stroke="#e8e8e8" stroke-width="1.2"/></svg>
<div class="t" style="left:1243px;top:70px;font-size:14px;color:#f2f2f2;transform-origin:0 0;transform:scaleX(0.9286);">Vol 100</div>
<svg style="left:1307px;top:73px" width="13" height="8"><path d="M.5 7 L6.5 1 L12.5 7" fill="none" stroke="#e8e8e8" stroke-width="1.2"/></svg>
<div class="ab" style="left:1346px;top:60px;width:1px;height:38px;background:#3a3a3a"></div>
<svg style="left:1371px;top:74px" width="13" height="8"><path d="M.5 .5 L6.5 6.5 L12.5 .5" fill="none" stroke="#e8e8e8" stroke-width="1.2"/></svg>
<div class="t" style="left:1407px;top:70px;font-size:14px;color:#f2f2f2;transform-origin:0 0;transform:scaleX(0.9286);">Speed 100</div>
<svg style="left:1489px;top:73px" width="13" height="8"><path d="M.5 7 L6.5 1 L12.5 7" fill="none" stroke="#e8e8e8" stroke-width="1.2"/></svg>
<div class="ab" style="left:1051px;top:104px;width:471px;height:21px;border-radius:5px;background:#333"></div>
<div class="t b" style="left:1061px;top:106px;font-size:14px;color:#f2f2f2;transform-origin:0 0;transform:scaleX(0.9286);">Technical</div>
<svg style="left:1056px;top:133px" width="12" height="14"><path d="M1.8 .8 H7.2 L10.4 4 V11.6 Q10.4 12.8 9.2 12.8 H1.8 Q.6 12.8 .6 11.6 V2 Q.6 .8 1.8 .8 Z M7.2 .8 V2.8 Q7.2 4 8.4 4 H10.4" fill="none" stroke="#e8e8e8" stroke-width="1.3"/></svg>
<div class="t" style="left:1077px;top:131px;font-size:14px;color:#f2f2f2;transform-origin:0 0;transform:scaleX(0.9286);">Device Status</div>
<div class="t" style="left:1191px;top:131px;font-size:14px;color:#f2f2f2;transform-origin:0 0;transform:scaleX(0.9286);">Online &nbsp;( 6 devices in use )</div>
<svg style="left:1056px;top:158px" width="12" height="14"><path d="M1.8 .8 H7.2 L10.4 4 V11.6 Q10.4 12.8 9.2 12.8 H1.8 Q.6 12.8 .6 11.6 V2 Q.6 .8 1.8 .8 Z M7.2 .8 V2.8 Q7.2 4 8.4 4 H10.4" fill="none" stroke="#e8e8e8" stroke-width="1.3"/></svg>
<div class="t" style="left:1077px;top:156px;font-size:14px;color:#f2f2f2;transform-origin:0 0;transform:scaleX(0.9286);">Device Count</div>
<div class="t" style="left:1191px;top:156px;font-size:14px;color:#f2f2f2;transform-origin:0 0;transform:scaleX(0.9286);">6 midi playback devices present</div>
<svg style="left:1056px;top:183px" width="12" height="14"><path d="M1.8 .8 H7.2 L10.4 4 V11.6 Q10.4 12.8 9.2 12.8 H1.8 Q.6 12.8 .6 11.6 V2 Q.6 .8 1.8 .8 Z M7.2 .8 V2.8 Q7.2 4 8.4 4 H10.4" fill="none" stroke="#e8e8e8" stroke-width="1.3"/></svg>
<div class="t" style="left:1077px;top:181px;font-size:14px;color:#f2f2f2;transform-origin:0 0;transform:scaleX(0.9286);">Resolution</div>
<div class="t" style="left:1191px;top:181px;font-size:14px;color:#f2f2f2;transform-origin:0 0;transform:scaleX(0.9286);">2.00 ms / 50.0%</div>
<svg style="left:1056px;top:208px" width="12" height="14"><path d="M1.8 .8 H7.2 L10.4 4 V11.6 Q10.4 12.8 9.2 12.8 H1.8 Q.6 12.8 .6 11.6 V2 Q.6 .8 1.8 .8 Z M7.2 .8 V2.8 Q7.2 4 8.4 4 H10.4" fill="none" stroke="#e8e8e8" stroke-width="1.3"/></svg>
<div class="t" style="left:1077px;top:206px;font-size:14px;color:#f2f2f2;transform-origin:0 0;transform:scaleX(0.9286);">Name</div>
<div class="t" style="left:1191px;top:206px;font-size:14px;color:#f2f2f2;transform-origin:0 0;transform:scaleX(0.9286);">Rock.mid</div>
<svg style="left:1056px;top:233px" width="12" height="14"><path d="M1.8 .8 H7.2 L10.4 4 V11.6 Q10.4 12.8 9.2 12.8 H1.8 Q.6 12.8 .6 11.6 V2 Q.6 .8 1.8 .8 Z M7.2 .8 V2.8 Q7.2 4 8.4 4 H10.4" fill="none" stroke="#e8e8e8" stroke-width="1.3"/></svg>
<div class="t" style="left:1077px;top:231px;font-size:14px;color:#f2f2f2;transform-origin:0 0;transform:scaleX(0.9286);">Folder</div>
<div class="t" style="left:1191px;top:231px;font-size:14px;color:#f2f2f2;transform-origin:0 0;transform:scaleX(0.9286);">!:\</div>
<svg style="left:1056px;top:258px" width="12" height="14"><path d="M1.8 .8 H7.2 L10.4 4 V11.6 Q10.4 12.8 9.2 12.8 H1.8 Q.6 12.8 .6 11.6 V2 Q.6 .8 1.8 .8 Z M7.2 .8 V2.8 Q7.2 4 8.4 4 H10.4" fill="none" stroke="#e8e8e8" stroke-width="1.3"/></svg>
<div class="t" style="left:1077px;top:256px;font-size:14px;color:#f2f2f2;transform-origin:0 0;transform:scaleX(0.9286);">Size</div>
<div class="t" style="left:1191px;top:256px;font-size:14px;color:#f2f2f2;transform-origin:0 0;transform:scaleX(0.9286);">81,481 b &nbsp;( 0.081 MB )</div>
<svg style="left:1056px;top:283px" width="12" height="14"><path d="M1.8 .8 H7.2 L10.4 4 V11.6 Q10.4 12.8 9.2 12.8 H1.8 Q.6 12.8 .6 11.6 V2 Q.6 .8 1.8 .8 Z M7.2 .8 V2.8 Q7.2 4 8.4 4 H10.4" fill="none" stroke="#e8e8e8" stroke-width="1.3"/></svg>
<div class="t" style="left:1077px;top:281px;font-size:14px;color:#f2f2f2;transform-origin:0 0;transform:scaleX(0.9286);">File</div>
<div class="t" style="left:1191px;top:281px;font-size:14px;color:#f2f2f2;transform-origin:0 0;transform:scaleX(0.9286);">16 / 25</div>
<svg style="left:1056px;top:308px" width="12" height="14"><path d="M1.8 .8 H7.2 L10.4 4 V11.6 Q10.4 12.8 9.2 12.8 H1.8 Q.6 12.8 .6 11.6 V2 Q.6 .8 1.8 .8 Z M7.2 .8 V2.8 Q7.2 4 8.4 4 H10.4" fill="none" stroke="#e8e8e8" stroke-width="1.3"/></svg>
<div class="t" style="left:1077px;top:306px;font-size:14px;color:#f2f2f2;transform-origin:0 0;transform:scaleX(0.9286);">Format</div>
<div class="t" style="left:1191px;top:306px;font-size:14px;color:#f2f2f2;transform-origin:0 0;transform:scaleX(0.9286);">1 / Multi-Track</div>
<svg style="left:1056px;top:333px" width="12" height="14"><path d="M1.8 .8 H7.2 L10.4 4 V11.6 Q10.4 12.8 9.2 12.8 H1.8 Q.6 12.8 .6 11.6 V2 Q.6 .8 1.8 .8 Z M7.2 .8 V2.8 Q7.2 4 8.4 4 H10.4" fill="none" stroke="#e8e8e8" stroke-width="1.3"/></svg>
<div class="t" style="left:1077px;top:331px;font-size:14px;color:#f2f2f2;transform-origin:0 0;transform:scaleX(0.9286);">Tracks</div>
<div class="t" style="left:1191px;top:331px;font-size:14px;color:#f2f2f2;transform-origin:0 0;transform:scaleX(0.9286);">9</div>
<svg style="left:1056px;top:358px" width="12" height="14"><path d="M1.8 .8 H7.2 L10.4 4 V11.6 Q10.4 12.8 9.2 12.8 H1.8 Q.6 12.8 .6 11.6 V2 Q.6 .8 1.8 .8 Z M7.2 .8 V2.8 Q7.2 4 8.4 4 H10.4" fill="none" stroke="#e8e8e8" stroke-width="1.3"/></svg>
<div class="t" style="left:1077px;top:356px;font-size:14px;color:#f2f2f2;transform-origin:0 0;transform:scaleX(0.9286);">Messages</div>
<div class="t" style="left:1191px;top:356px;font-size:14px;color:#f2f2f2;transform-origin:0 0;transform:scaleX(0.9286);">28,450 / 119,250</div>
<svg style="left:1056px;top:383px" width="12" height="14"><path d="M1.8 .8 H7.2 L10.4 4 V11.6 Q10.4 12.8 9.2 12.8 H1.8 Q.6 12.8 .6 11.6 V2 Q.6 .8 1.8 .8 Z M7.2 .8 V2.8 Q7.2 4 8.4 4 H10.4" fill="none" stroke="#e8e8e8" stroke-width="1.3"/></svg>
<div class="t" style="left:1077px;top:381px;font-size:14px;color:#f2f2f2;transform-origin:0 0;transform:scaleX(0.9286);">Msg Rate</div>
<div class="t" style="left:1191px;top:381px;font-size:14px;color:#f2f2f2;transform-origin:0 0;transform:scaleX(0.9286);">362 msgs/sec</div>
<svg style="left:1056px;top:408px" width="12" height="14"><path d="M1.8 .8 H7.2 L10.4 4 V11.6 Q10.4 12.8 9.2 12.8 H1.8 Q.6 12.8 .6 11.6 V2 Q.6 .8 1.8 .8 Z M7.2 .8 V2.8 Q7.2 4 8.4 4 H10.4" fill="none" stroke="#e8e8e8" stroke-width="1.3"/></svg>
<div class="t" style="left:1077px;top:406px;font-size:14px;color:#f2f2f2;transform-origin:0 0;transform:scaleX(0.9286);">Data Rate</div>
<div class="t" style="left:1191px;top:406px;font-size:14px;color:#f2f2f2;transform-origin:0 0;transform:scaleX(0.9286);">1,448 bytes/sec</div>
<div class="ab" style="left:1528px;top:104px;width:9px;height:311px;border-radius:5px;background:#333"></div>
<div class="pnl" style="left:1051px;top:426px;width:493px;height:47px"></div>
<div class="btn" style="left:1186px;top:432px;width:82px;height:36px"></div>
<svg style="left:1193px;top:442px" width="16" height="16" viewBox="0 0 16 16"><path d="M6.6 .8 H9.4 L9.9 2.9 L11.5 3.8 L13.5 3.1 L14.9 5.5 L13.3 7 V9 L14.9 10.5 L13.5 12.9 L11.5 12.2 L9.9 13.1 L9.4 15.2 H6.6 L6.1 13.1 L4.5 12.2 L2.5 12.9 L1.1 10.5 L2.7 9 V7 L1.1 5.5 L2.5 3.1 L4.5 3.8 L6.1 2.9 Z" fill="none" stroke="#e8e8e8" stroke-width="1.2"/><circle cx="8" cy="8" r="2.6" fill="none" stroke="#e8e8e8" stroke-width="1.2"/></svg>
<div class="t" style="left:1215px;top:443px;font-size:14px;color:#f2f2f2;transform-origin:0 0;transform:scaleX(0.9286);">Settings</div>
<svg style="left:1278px;top:442px" width="14" height="14"><rect x=".5" y=".5" width="13" height="13" rx="1.5" fill="none" stroke="#e8e8e8" stroke-width="1.2"/><path d="M4 5 V11 M7 3.5 V11 M10 6.5 V11" fill="none" stroke="#e8e8e8" stroke-width="1.6"/></svg>
<div class="t" style="left:1298px;top:441px;font-size:14px;color:#f2f2f2;transform-origin:0 0;transform:scaleX(0.9286);">Playback Devices</div>
<div class="t" style="left:1056px;top:479px;font-size:14px;color:#f2f2f2;transform-origin:0 0;transform:scaleX(0.9286);">File Types</div>
<div class="t" style="left:1205px;top:479px;font-size:14px;color:#f2f2f2;transform-origin:0 0;transform:scaleX(0.9286);">Playback Device: All Midi Devices ( 6x )</div>
<div class="ab" style="left:1053px;top:502px;width:44px;height:20px;border-radius:5px;background:#fff"></div>
<div class="t" style="left:975.0px;width:200px;text-align:center;top:504px;font-size:14px;color:#000;transform-origin:100px 0;transform:scaleX(0.9286);">mid</div>
<div class="ab" style="left:1101px;top:502px;width:43px;height:20px;border-radius:5px;background:#fff"></div>
<div class="t" style="left:1022.5px;width:200px;text-align:center;top:504px;font-size:14px;color:#000;transform-origin:100px 0;transform:scaleX(0.9286);">midi</div>
<div class="ab" style="left:1148px;top:502px;width:44px;height:20px;border-radius:5px;background:#fff"></div>
<div class="t" style="left:1070.0px;width:200px;text-align:center;top:504px;font-size:14px;color:#000;transform-origin:100px 0;transform:scaleX(0.9286);">rmi</div>
<div class="ab" style="left:1202px;top:502px;width:26px;height:20px;border-radius:5px;background:#fff"></div>
<div class="t" style="left:1115px;width:200px;text-align:center;top:504px;font-size:14px;color:#000;transform-origin:100px 0;transform:scaleX(0.9286);">A</div>
<div class="t" style="left:1142px;width:200px;text-align:center;top:504px;font-size:14px;color:#f2f2f2;transform-origin:100px 0;transform:scaleX(0.9286);">M</div>
<div class="t" style="left:1170px;width:200px;text-align:center;top:504px;font-size:14px;color:#f2f2f2;transform-origin:100px 0;transform:scaleX(0.9286);">1</div>
<div class="t" style="left:1198px;width:200px;text-align:center;top:504px;font-size:14px;color:#f2f2f2;transform-origin:100px 0;transform:scaleX(0.9286);">2</div>
<div class="t" style="left:1226px;width:200px;text-align:center;top:504px;font-size:14px;color:#f2f2f2;transform-origin:100px 0;transform:scaleX(0.9286);">3</div>
<div class="t" style="left:1254px;width:200px;text-align:center;top:504px;font-size:14px;color:#f2f2f2;transform-origin:100px 0;transform:scaleX(0.9286);">4</div>
<div class="t" style="left:1282px;width:200px;text-align:center;top:504px;font-size:14px;color:#f2f2f2;transform-origin:100px 0;transform:scaleX(0.9286);">5</div>
<div class="t" style="left:1310px;width:200px;text-align:center;top:504px;font-size:14px;color:#f2f2f2;transform-origin:100px 0;transform:scaleX(0.9286);">6</div>
<div class="t" style="left:1338px;width:200px;text-align:center;top:504px;font-size:14px;color:#f2f2f2;transform-origin:100px 0;transform:scaleX(0.9286);">-</div>
<div class="t" style="left:1366px;width:200px;text-align:center;top:504px;font-size:14px;color:#f2f2f2;transform-origin:100px 0;transform:scaleX(0.9286);">-</div>
<div class="t" style="left:1394px;width:200px;text-align:center;top:504px;font-size:14px;color:#f2f2f2;transform-origin:100px 0;transform:scaleX(0.9286);">-</div>
<div class="t" style="left:1422px;width:200px;text-align:center;top:504px;font-size:14px;color:#f2f2f2;transform-origin:100px 0;transform:scaleX(0.9286);">-</div>
<div class="t" style="left:1197px;width:200px;text-align:center;top:530px;font-size:14px;color:#f2f2f2;transform-origin:100px 0;transform:scaleX(0.9286);">Transpose &nbsp;0</div>
<div class="ab" style="left:1053px;top:562px;width:489px;height:2px;background:#3c3c3c"></div>
<div class="ab" style="left:1291px;top:555px;width:12px;height:16px;border-radius:6px;background:#fff"></div>
<div class="t" style="left:1197px;width:200px;text-align:center;top:586px;font-size:14px;color:#f2f2f2;transform-origin:100px 0;transform:scaleX(0.9286);">Speed &nbsp;120 %</div>
<div class="ab" style="left:1053px;top:618px;width:489px;height:2px;background:#3c3c3c"></div>
<div class="ab" style="left:1275px;top:611px;width:12px;height:16px;border-radius:6px;background:#fff"></div>
<div class="t" style="left:1197px;width:200px;text-align:center;top:637px;font-size:14px;color:#f2f2f2;transform-origin:100px 0;transform:scaleX(0.9286);">Volume &nbsp;82 %</div>
<div class="ab" style="left:1053px;top:669px;width:489px;height:2px;background:#3c3c3c"></div>
<div class="ab" style="left:1247px;top:662px;width:12px;height:16px;border-radius:6px;background:#fff"></div>
<div class="t b" style="left:19px;top:697px;font-size:14px;color:#f2f2f2;transform-origin:0 0;transform:scaleX(0.9286);">Piano</div>
<div class="t" style="left:1380px;top:697px;font-size:14px;color:#f2f2f2;transform-origin:0 0;transform:scaleX(0.9286);">White</div>
<div class="t" style="left:1430px;top:697px;font-size:14px;color:#f2f2f2;transform-origin:0 0;transform:scaleX(0.9286);">C + F</div>
<div class="btn" style="left:1473px;top:688px;width:36px;height:36px"></div>
<div class="t" style="left:1391px;width:200px;text-align:center;top:698px;font-size:14px;color:#f2f2f2;transform-origin:100px 0;transform:scaleX(0.9286);">C</div>
<div class="t" style="left:1523px;top:697px;font-size:14px;color:#f2f2f2;transform-origin:0 0;transform:scaleX(0.9286);">Off</div>
<svg style="left:1565px;top:703px" width="10" height="6"><path d="M0 0 H10 L5 5.5 Z" fill="#f2f2f2"/></svg>
<div class="ab" style="left:20px;top:729px;width:1560px;height:142px;background:linear-gradient(to bottom,#ffffff 0%,#f9f9f9 55%,#fdfdfd 100%)"></div>
<div class="ab" style="left:49px;top:729px;width:2px;height:142px;background:#bcbcbc"></div>
<div class="ab" style="left:79px;top:729px;width:2px;height:142px;background:#bcbcbc"></div>
<div class="ab" style="left:109px;top:729px;width:2px;height:142px;background:#bcbcbc"></div>
<div class="ab" style="left:139px;top:729px;width:2px;height:142px;background:#bcbcbc"></div>
<div class="ab" style="left:169px;top:729px;width:2px;height:142px;background:#bcbcbc"></div>
<div class="ab" style="left:199px;top:729px;width:2px;height:142px;background:#bcbcbc"></div>
<div class="ab" style="left:229px;top:729px;width:2px;height:142px;background:#bcbcbc"></div>
<div class="ab" style="left:259px;top:729px;width:2px;height:142px;background:#bcbcbc"></div>
<div class="ab" style="left:289px;top:729px;width:2px;height:142px;background:#bcbcbc"></div>
<div class="ab" style="left:319px;top:729px;width:2px;height:142px;background:#bcbcbc"></div>
<div class="ab" style="left:349px;top:729px;width:2px;height:142px;background:#bcbcbc"></div>
<div class="ab" style="left:379px;top:729px;width:2px;height:142px;background:#bcbcbc"></div>
<div class="ab" style="left:409px;top:729px;width:2px;height:142px;background:#bcbcbc"></div>
<div class="ab" style="left:439px;top:729px;width:2px;height:142px;background:#bcbcbc"></div>
<div class="ab" style="left:469px;top:729px;width:2px;height:142px;background:#bcbcbc"></div>
<div class="ab" style="left:499px;top:729px;width:2px;height:142px;background:#bcbcbc"></div>
<div class="ab" style="left:529px;top:729px;width:2px;height:142px;background:#bcbcbc"></div>
<div class="ab" style="left:559px;top:729px;width:2px;height:142px;background:#bcbcbc"></div>
<div class="ab" style="left:589px;top:729px;width:2px;height:142px;background:#bcbcbc"></div>
<div class="ab" style="left:619px;top:729px;width:2px;height:142px;background:#bcbcbc"></div>
<div class="ab" style="left:649px;top:729px;width:2px;height:142px;background:#bcbcbc"></div>
<div class="ab" style="left:679px;top:729px;width:2px;height:142px;background:#bcbcbc"></div>
<div class="ab" style="left:709px;top:729px;width:2px;height:142px;background:#bcbcbc"></div>
<div class="ab" style="left:739px;top:729px;width:2px;height:142px;background:#bcbcbc"></div>
<div class="ab" style="left:769px;top:729px;width:2px;height:142px;background:#bcbcbc"></div>
<div class="ab" style="left:799px;top:729px;width:2px;height:142px;background:#bcbcbc"></div>
<div class="ab" style="left:829px;top:729px;width:2px;height:142px;background:#bcbcbc"></div>
<div class="ab" style="left:859px;top:729px;width:2px;height:142px;background:#bcbcbc"></div>
<div class="ab" style="left:889px;top:729px;width:2px;height:142px;background:#bcbcbc"></div>
<div class="ab" style="left:919px;top:729px;width:2px;height:142px;background:#bcbcbc"></div>
<div class="ab" style="left:949px;top:729px;width:2px;height:142px;background:#bcbcbc"></div>
<div class="ab" style="left:979px;top:729px;width:2px;height:142px;background:#bcbcbc"></div>
<div class="ab" style="left:1009px;top:729px;width:2px;height:142px;background:#bcbcbc"></div>
<div class="ab" style="left:1039px;top:729px;width:2px;height:142px;background:#bcbcbc"></div>
<div class="ab" style="left:1069px;top:729px;width:2px;height:142px;background:#bcbcbc"></div>
<div class="ab" style="left:1099px;top:729px;width:2px;height:142px;background:#bcbcbc"></div>
<div class="ab" style="left:1129px;top:729px;width:2px;height:142px;background:#bcbcbc"></div>
<div class="ab" style="left:1159px;top:729px;width:2px;height:142px;background:#bcbcbc"></div>
<div class="ab" style="left:1189px;top:729px;width:2px;height:142px;background:#bcbcbc"></div>
<div class="ab" style="left:1219px;top:729px;width:2px;height:142px;background:#bcbcbc"></div>
<div class="ab" style="left:1249px;top:729px;width:2px;height:142px;background:#bcbcbc"></div>
<div class="ab" style="left:1279px;top:729px;width:2px;height:142px;background:#bcbcbc"></div>
<div class="ab" style="left:1309px;top:729px;width:2px;height:142px;background:#bcbcbc"></div>
<div class="ab" style="left:1339px;top:729px;width:2px;height:142px;background:#bcbcbc"></div>
<div class="ab" style="left:1369px;top:729px;width:2px;height:142px;background:#bcbcbc"></div>
<div class="ab" style="left:1399px;top:729px;width:2px;height:142px;background:#bcbcbc"></div>
<div class="ab" style="left:1429px;top:729px;width:2px;height:142px;background:#bcbcbc"></div>
<div class="ab" style="left:1459px;top:729px;width:2px;height:142px;background:#bcbcbc"></div>
<div class="ab" style="left:1489px;top:729px;width:2px;height:142px;background:#bcbcbc"></div>
<div class="ab" style="left:1519px;top:729px;width:2px;height:142px;background:#bcbcbc"></div>
<div class="ab" style="left:1549px;top:729px;width:2px;height:142px;background:#bcbcbc"></div>
<div class="ab" style="left:48px;top:869px;width:4px;height:2px;background:#3a3a3a;border-radius:2px 2px 0 0"></div>
<div class="ab" style="left:78px;top:869px;width:4px;height:2px;background:#3a3a3a;border-radius:2px 2px 0 0"></div>
<div class="ab" style="left:108px;top:869px;width:4px;height:2px;background:#3a3a3a;border-radius:2px 2px 0 0"></div>
<div class="ab" style="left:138px;top:869px;width:4px;height:2px;background:#3a3a3a;border-radius:2px 2px 0 0"></div>
<div class="ab" style="left:168px;top:869px;width:4px;height:2px;background:#3a3a3a;border-radius:2px 2px 0 0"></div>
<div class="ab" style="left:198px;top:869px;width:4px;height:2px;background:#3a3a3a;border-radius:2px 2px 0 0"></div>
<div class="ab" style="left:228px;top:869px;width:4px;height:2px;background:#3a3a3a;border-radius:2px 2px 0 0"></div>
<div class="ab" style="left:258px;top:869px;width:4px;height:2px;background:#3a3a3a;border-radius:2px 2px 0 0"></div>
<div class="ab" style="left:288px;top:869px;width:4px;height:2px;background:#3a3a3a;border-radius:2px 2px 0 0"></div>
<div class="ab" style="left:318px;top:869px;width:4px;height:2px;background:#3a3a3a;border-radius:2px 2px 0 0"></div>
<div class="ab" style="left:348px;top:869px;width:4px;height:2px;background:#3a3a3a;border-radius:2px 2px 0 0"></div>
<div class="ab" style="left:378px;top:869px;width:4px;height:2px;background:#3a3a3a;border-radius:2px 2px 0 0"></div>
<div class="ab" style="left:408px;top:869px;width:4px;height:2px;background:#3a3a3a;border-radius:2px 2px 0 0"></div>
<div class="ab" style="left:438px;top:869px;width:4px;height:2px;background:#3a3a3a;border-radius:2px 2px 0 0"></div>
<div class="ab" style="left:468px;top:869px;width:4px;height:2px;background:#3a3a3a;border-radius:2px 2px 0 0"></div>
<div class="ab" style="left:498px;top:869px;width:4px;height:2px;background:#3a3a3a;border-radius:2px 2px 0 0"></div>
<div class="ab" style="left:528px;top:869px;width:4px;height:2px;background:#3a3a3a;border-radius:2px 2px 0 0"></div>
<div class="ab" style="left:558px;top:869px;width:4px;height:2px;background:#3a3a3a;border-radius:2px 2px 0 0"></div>
<div class="ab" style="left:588px;top:869px;width:4px;height:2px;background:#3a3a3a;border-radius:2px 2px 0 0"></div>
<div class="ab" style="left:618px;top:869px;width:4px;height:2px;background:#3a3a3a;border-radius:2px 2px 0 0"></div>
<div class="ab" style="left:648px;top:869px;width:4px;height:2px;background:#3a3a3a;border-radius:2px 2px 0 0"></div>
<div class="ab" style="left:678px;top:869px;width:4px;height:2px;background:#3a3a3a;border-radius:2px 2px 0 0"></div>
<div class="ab" style="left:708px;top:869px;width:4px;height:2px;background:#3a3a3a;border-radius:2px 2px 0 0"></div>
<div class="ab" style="left:738px;top:869px;width:4px;height:2px;background:#3a3a3a;border-radius:2px 2px 0 0"></div>
<div class="ab" style="left:768px;top:869px;width:4px;height:2px;background:#3a3a3a;border-radius:2px 2px 0 0"></div>
<div class="ab" style="left:798px;top:869px;width:4px;height:2px;background:#3a3a3a;border-radius:2px 2px 0 0"></div>
<div class="ab" style="left:828px;top:869px;width:4px;height:2px;background:#3a3a3a;border-radius:2px 2px 0 0"></div>
<div class="ab" style="left:858px;top:869px;width:4px;height:2px;background:#3a3a3a;border-radius:2px 2px 0 0"></div>
<div class="ab" style="left:888px;top:869px;width:4px;height:2px;background:#3a3a3a;border-radius:2px 2px 0 0"></div>
<div class="ab" style="left:918px;top:869px;width:4px;height:2px;background:#3a3a3a;border-radius:2px 2px 0 0"></div>
<div class="ab" style="left:948px;top:869px;width:4px;height:2px;background:#3a3a3a;border-radius:2px 2px 0 0"></div>
<div class="ab" style="left:978px;top:869px;width:4px;height:2px;background:#3a3a3a;border-radius:2px 2px 0 0"></div>
<div class="ab" style="left:1008px;top:869px;width:4px;height:2px;background:#3a3a3a;border-radius:2px 2px 0 0"></div>
<div class="ab" style="left:1038px;top:869px;width:4px;height:2px;background:#3a3a3a;border-radius:2px 2px 0 0"></div>
<div class="ab" style="left:1068px;top:869px;width:4px;height:2px;background:#3a3a3a;border-radius:2px 2px 0 0"></div>
<div class="ab" style="left:1098px;top:869px;width:4px;height:2px;background:#3a3a3a;border-radius:2px 2px 0 0"></div>
<div class="ab" style="left:1128px;top:869px;width:4px;height:2px;background:#3a3a3a;border-radius:2px 2px 0 0"></div>
<div class="ab" style="left:1158px;top:869px;width:4px;height:2px;background:#3a3a3a;border-radius:2px 2px 0 0"></div>
<div class="ab" style="left:1188px;top:869px;width:4px;height:2px;background:#3a3a3a;border-radius:2px 2px 0 0"></div>
<div class="ab" style="left:1218px;top:869px;width:4px;height:2px;background:#3a3a3a;border-radius:2px 2px 0 0"></div>
<div class="ab" style="left:1248px;top:869px;width:4px;height:2px;background:#3a3a3a;border-radius:2px 2px 0 0"></div>
<div class="ab" style="left:1278px;top:869px;width:4px;height:2px;background:#3a3a3a;border-radius:2px 2px 0 0"></div>
<div class="ab" style="left:1308px;top:869px;width:4px;height:2px;background:#3a3a3a;border-radius:2px 2px 0 0"></div>
<div class="ab" style="left:1338px;top:869px;width:4px;height:2px;background:#3a3a3a;border-radius:2px 2px 0 0"></div>
<div class="ab" style="left:1368px;top:869px;width:4px;height:2px;background:#3a3a3a;border-radius:2px 2px 0 0"></div>
<div class="ab" style="left:1398px;top:869px;width:4px;height:2px;background:#3a3a3a;border-radius:2px 2px 0 0"></div>
<div class="ab" style="left:1428px;top:869px;width:4px;height:2px;background:#3a3a3a;border-radius:2px 2px 0 0"></div>
<div class="ab" style="left:1458px;top:869px;width:4px;height:2px;background:#3a3a3a;border-radius:2px 2px 0 0"></div>
<div class="ab" style="left:1488px;top:869px;width:4px;height:2px;background:#3a3a3a;border-radius:2px 2px 0 0"></div>
<div class="ab" style="left:1518px;top:869px;width:4px;height:2px;background:#3a3a3a;border-radius:2px 2px 0 0"></div>
<div class="ab" style="left:1548px;top:869px;width:4px;height:2px;background:#3a3a3a;border-radius:2px 2px 0 0"></div>
<div class="ab" style="left:260px;top:729px;width:30px;height:142px;background:#0d0d0d"></div>
<div class="ab" style="left:260px;top:729px;width:30px;height:136px;border:1px solid #9a9a9a;border-top:none;background:linear-gradient(to bottom,#ffffff 0%,#a9c4d2 30%,#5b8ea6 62%,#a9c8d6 85%,#f4f8fa 100%)"></div>
<div class="ab" style="left:470px;top:729px;width:30px;height:142px;background:#0d0d0d"></div>
<div class="ab" style="left:470px;top:729px;width:30px;height:136px;border:1px solid #9a9a9a;border-top:none;background:linear-gradient(to bottom,#ffffff 0%,#a9c4d2 30%,#5b8ea6 62%,#a9c8d6 85%,#f4f8fa 100%)"></div>
<div class="ab" style="left:680px;top:729px;width:30px;height:142px;background:#0d0d0d"></div>
<div class="ab" style="left:680px;top:729px;width:30px;height:136px;border:1px solid #9a9a9a;border-top:none;background:linear-gradient(to bottom,#ffffff 0%,#a9c4d2 30%,#5b8ea6 62%,#a9c8d6 85%,#f4f8fa 100%)"></div>
<div class="ab" style="left:890px;top:729px;width:30px;height:142px;background:#0d0d0d"></div>
<div class="ab" style="left:890px;top:729px;width:30px;height:136px;border:1px solid #9a9a9a;border-top:none;background:linear-gradient(to bottom,#ffffff 0%,#a9c4d2 30%,#5b8ea6 62%,#a9c8d6 85%,#f4f8fa 100%)"></div>
<div class="ab" style="left:40px;top:729px;width:20px;height:93px;background:#000;box-shadow:inset 0 0 0 1.5px #8c8c8c"></div>
<div class="ab" style="left:100px;top:729px;width:20px;height:93px;background:#000;box-shadow:inset 0 0 0 1.5px #8c8c8c"></div>
<div class="ab" style="left:130px;top:729px;width:20px;height:93px;background:#000;box-shadow:inset 0 0 0 1.5px #8c8c8c"></div>
<div class="ab" style="left:190px;top:729px;width:20px;height:93px;background:#000;box-shadow:inset 0 0 0 1.5px #8c8c8c"></div>
<div class="ab" style="left:220px;top:729px;width:20px;height:93px;background:#000;box-shadow:inset 0 0 0 1.5px #8c8c8c"></div>
<div class="ab" style="left:250px;top:729px;width:20px;height:93px;background:#000;box-shadow:inset 0 0 0 1.5px #8c8c8c"></div>
<div class="ab" style="left:310px;top:729px;width:20px;height:93px;background:#000;box-shadow:inset 0 0 0 1.5px #8c8c8c"></div>
<div class="ab" style="left:340px;top:729px;width:20px;height:93px;background:#000;box-shadow:inset 0 0 0 1.5px #8c8c8c"></div>
<div class="ab" style="left:400px;top:729px;width:20px;height:93px;background:#000;box-shadow:inset 0 0 0 1.5px #8c8c8c"></div>
<div class="ab" style="left:430px;top:729px;width:20px;height:93px;background:#000;box-shadow:inset 0 0 0 1.5px #8c8c8c"></div>
<div class="ab" style="left:460px;top:729px;width:20px;height:93px;background:#000;box-shadow:inset 0 0 0 1.5px #8c8c8c"></div>
<div class="ab" style="left:520px;top:729px;width:20px;height:93px;background:#000;box-shadow:inset 0 0 0 1.5px #8c8c8c"></div>
<div class="ab" style="left:550px;top:729px;width:20px;height:93px;background:#000;box-shadow:inset 0 0 0 1.5px #8c8c8c"></div>
<div class="ab" style="left:610px;top:729px;width:20px;height:93px;background:#000;box-shadow:inset 0 0 0 1.5px #8c8c8c"></div>
<div class="ab" style="left:640px;top:729px;width:20px;height:93px;background:#000;box-shadow:inset 0 0 0 1.5px #8c8c8c"></div>
<div class="ab" style="left:670px;top:729px;width:20px;height:93px;background:#000;box-shadow:inset 0 0 0 1.5px #8c8c8c"></div>
<div class="ab" style="left:730px;top:729px;width:20px;height:93px;background:#000;box-shadow:inset 0 0 0 1.5px #8c8c8c"></div>
<div class="ab" style="left:760px;top:729px;width:20px;height:93px;background:#000;box-shadow:inset 0 0 0 1.5px #8c8c8c"></div>
<div class="ab" style="left:820px;top:729px;width:20px;height:93px;background:#000;box-shadow:inset 0 0 0 1.5px #8c8c8c"></div>
<div class="ab" style="left:850px;top:729px;width:20px;height:93px;background:#000;box-shadow:inset 0 0 0 1.5px #8c8c8c"></div>
<div class="ab" style="left:880px;top:729px;width:20px;height:93px;background:#000;box-shadow:inset 0 0 0 1.5px #8c8c8c"></div>
<div class="ab" style="left:940px;top:729px;width:20px;height:93px;background:#000;box-shadow:inset 0 0 0 1.5px #8c8c8c"></div>
<div class="ab" style="left:970px;top:729px;width:20px;height:93px;background:#000;box-shadow:inset 0 0 0 1.5px #8c8c8c"></div>
<div class="ab" style="left:1030px;top:729px;width:20px;height:93px;background:#000;box-shadow:inset 0 0 0 1.5px #8c8c8c"></div>
<div class="ab" style="left:1060px;top:729px;width:20px;height:93px;background:#000;box-shadow:inset 0 0 0 1.5px #8c8c8c"></div>
<div class="ab" style="left:1090px;top:729px;width:20px;height:93px;background:#000;box-shadow:inset 0 0 0 1.5px #8c8c8c"></div>
<div class="ab" style="left:1150px;top:729px;width:20px;height:93px;background:#000;box-shadow:inset 0 0 0 1.5px #8c8c8c"></div>
<div class="ab" style="left:1180px;top:729px;width:20px;height:93px;background:#000;box-shadow:inset 0 0 0 1.5px #8c8c8c"></div>
<div class="ab" style="left:1240px;top:729px;width:20px;height:93px;background:#000;box-shadow:inset 0 0 0 1.5px #8c8c8c"></div>
<div class="ab" style="left:1270px;top:729px;width:20px;height:93px;background:#000;box-shadow:inset 0 0 0 1.5px #8c8c8c"></div>
<div class="ab" style="left:1300px;top:729px;width:20px;height:93px;background:#000;box-shadow:inset 0 0 0 1.5px #8c8c8c"></div>
<div class="ab" style="left:1360px;top:729px;width:20px;height:93px;background:#000;box-shadow:inset 0 0 0 1.5px #8c8c8c"></div>
<div class="ab" style="left:1390px;top:729px;width:20px;height:93px;background:#000;box-shadow:inset 0 0 0 1.5px #8c8c8c"></div>
<div class="ab" style="left:1450px;top:729px;width:20px;height:93px;background:#000;box-shadow:inset 0 0 0 1.5px #8c8c8c"></div>
<div class="ab" style="left:1480px;top:729px;width:20px;height:93px;background:#000;box-shadow:inset 0 0 0 1.5px #8c8c8c"></div>
<div class="ab" style="left:1510px;top:729px;width:20px;height:93px;background:#000;box-shadow:inset 0 0 0 1.5px #8c8c8c"></div>
<div class="t" style="left:718px;top:834px;font-size:17px;line-height:18px;color:#bdbdbd">C</div>
<div class="t b" style="left:22px;top:888px;font-size:23.6px;line-height:26px;color:#f4f4f4">Playback Progress</div>
<div class="btn" style="left:1083px;top:883px;width:54px;height:36px"></div>
<svg style="left:1090px;top:895px" width="16" height="12"><rect x=".5" y=".5" width="15" height="11" rx="1.5" fill="none" stroke="#e8e8e8" stroke-width="1.2"/><line x1="5.5" y1=".5" x2="5.5" y2="11.5" fill="none" stroke="#e8e8e8" stroke-width="1.2"/></svg>
<div class="t" style="left:1112px;top:893px;font-size:14px;color:#f2f2f2;transform-origin:0 0;transform:scaleX(0.9286);">Nav</div>
<div class="btn" style="left:1142px;top:883px;width:66px;height:36px"></div>
<svg style="left:1149px;top:895px" width="16" height="12"><rect x=".5" y=".5" width="15" height="11" rx="1.5" fill="none" stroke="#e8e8e8" stroke-width="1.2"/><line x1="5.5" y1=".5" x2="5.5" y2="11.5" fill="none" stroke="#e8e8e8" stroke-width="1.2"/></svg>
<div class="t" style="left:1171px;top:893px;font-size:14px;color:#f2f2f2;transform-origin:0 0;transform:scaleX(0.9286);">Piano</div>
<div class="btn" style="left:1213px;top:883px;width:58px;height:36px"></div>
<svg style="left:1221px;top:894px" width="14" height="14"><rect x=".5" y=".5" width="13" height="13" rx="1.5" fill="none" stroke="#e8e8e8" stroke-width="1.2"/><path d="M4 5 V11 M7 3.5 V11 M10 6.5 V11" fill="none" stroke="#e8e8e8" stroke-width="1.6"/></svg>
<div class="t" style="left:1240px;top:893px;font-size:14px;color:#f2f2f2;transform-origin:0 0;transform:scaleX(0.9286);">Pbar</div>
<div class="btn" style="left:1276px;top:883px;width:59px;height:36px"></div>
<svg style="left:1284px;top:894px" width="14" height="14"><rect x=".5" y=".5" width="13" height="13" rx="1.5" fill="none" stroke="#e8e8e8" stroke-width="1.2"/><path d="M4 5 V11 M7 3.5 V11 M10 6.5 V11" fill="none" stroke="#e8e8e8" stroke-width="1.6"/></svg>
<div class="t" style="left:1303px;top:893px;font-size:14px;color:#f2f2f2;transform-origin:0 0;transform:scaleX(0.9286);">Bars</div>
<div class="btn" style="left:1339px;top:883px;width:67px;height:36px"></div>
<svg style="left:1347px;top:894px" width="14" height="14"><rect x=".5" y=".5" width="13" height="13" rx="1.5" fill="none" stroke="#e8e8e8" stroke-width="1.2"/><path d="M4 5 V11 M7 3.5 V11 M10 6.5 V11" fill="none" stroke="#e8e8e8" stroke-width="1.6"/></svg>
<div class="t" style="left:1366px;top:893px;font-size:14px;color:#f2f2f2;transform-origin:0 0;transform:scaleX(0.9286);">Visual</div>
<div class="btn" style="left:1411px;top:883px;width:52px;height:36px"></div>
<svg style="left:1419px;top:894px" width="14" height="14"><rect x=".5" y=".5" width="13" height="13" rx="1.5" fill="none" stroke="#e8e8e8" stroke-width="1.2"/><path d="M3.5 4.5 H10.5 M3.5 7 H10.5 M3.5 9.5 H10.5" fill="none" stroke="#e8e8e8" stroke-width="1.2"/></svg>
<div class="t" style="left:1437px;top:893px;font-size:14px;color:#f2f2f2;transform-origin:0 0;transform:scaleX(0.9286);">Info</div>
<div class="btn" style="left:1467px;top:883px;width:81px;height:36px"></div>
<svg style="left:1474px;top:893px" width="16" height="16" viewBox="0 0 16 16"><path d="M6.6 .8 H9.4 L9.9 2.9 L11.5 3.8 L13.5 3.1 L14.9 5.5 L13.3 7 V9 L14.9 10.5 L13.5 12.9 L11.5 12.2 L9.9 13.1 L9.4 15.2 H6.6 L6.1 13.1 L4.5 12.2 L2.5 12.9 L1.1 10.5 L2.7 9 V7 L1.1 5.5 L2.5 3.1 L4.5 3.8 L6.1 2.9 Z" fill="none" stroke="#e8e8e8" stroke-width="1.2"/><circle cx="8" cy="8" r="2.6" fill="none" stroke="#e8e8e8" stroke-width="1.2"/></svg>
<div class="t" style="left:1496px;top:893px;font-size:14px;color:#f2f2f2;transform-origin:0 0;transform:scaleX(0.9286);">Settings</div>
<svg style="left:1565px;top:898px" width="10" height="6"><path d="M0 0 H10 L5 5.5 Z" fill="#f2f2f2"/></svg>
<div class="ab" style="left:7px;top:924px;width:1586px;height:79px;background:linear-gradient(to bottom,#0f0f0f 0%,#1c1c1c 35%,#262626 50%,#1c1c1c 65%,#0f0f0f 100%);border-radius:0 0 6px 6px"></div>
<div class="ab" style="left:191px;top:924px;width:1219px;height:79px;background:linear-gradient(to bottom,#0e161c 0%,#1c3442 18%,#3a6c88 38%,#4a84a3 50%,#3a6c88 62%,#1c3442 82%,#0c1419 100%)"></div>
<div class="ab" style="left:459px;top:926px;width:4px;height:76px;background:linear-gradient(to bottom,#333 0%,#eee 50%,#333 100%)"></div>
<div class="t" style="left:600px;width:400px;text-align:center;top:934px;font-size:56px;line-height:60px;color:#f4f4f4">01m 12s 701ms</div>
</body></html>
